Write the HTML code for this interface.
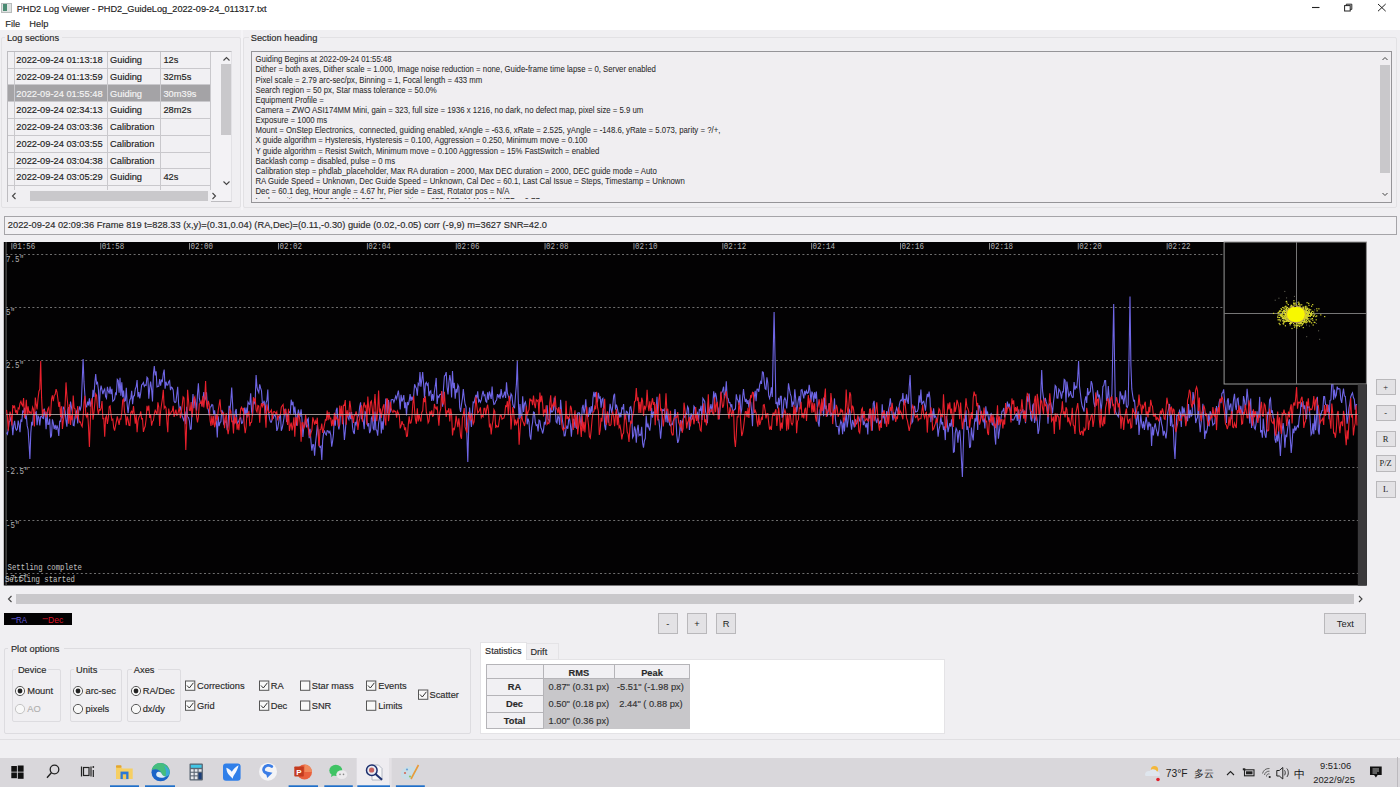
<!DOCTYPE html>
<html><head><meta charset="utf-8">
<style>
*{margin:0;padding:0;box-sizing:border-box}
html,body{width:1400px;height:787px;overflow:hidden;background:#f0eff2;font-family:"Liberation Sans",sans-serif;color:#2a2a2a}
.a{position:absolute}
.t{position:absolute;white-space:pre;font-size:9.3px;line-height:1;-webkit-text-stroke:0.15px currentColor;transform:scaleY(1.06);transform-origin:0 0.8465em}
#title{left:0;top:0;width:1400px;height:30px;background:#fff}
.tbl{border-collapse:collapse}
.sec{font-size:7.8px;line-height:10.15px;color:#222}
.btn{position:absolute;background:#e3e2e5;border:1px solid #b9b8bb;font-size:9px;text-align:center;color:#222}
.sb{position:absolute;background:#c9c8cb}
.chk{position:absolute;width:10px;height:10px;border:1px solid #555;background:#f6f6f6}
.rad{position:absolute;width:10px;height:10px;border:1px solid #555;border-radius:50%;background:#f6f6f6}
.mono{font-family:"Liberation Mono",monospace}
</style></head><body>
<!-- title & menu -->
<div id="title" class="a"></div>
<div class="a" style="left:1.4px;top:3.1px;width:11px;height:9.5px;background:#dfe3e2;border:1px solid #b8bcbc"></div>
<div class="a" style="left:2.6px;top:4.3px;width:4.6px;height:7.1px;background:#4a8a72"></div>
<svg class="a" style="left:1300px;top:0" width="100" height="16">
<line x1="12" y1="7.5" x2="19.5" y2="7.5" stroke="#222" stroke-width="1.1"/>
<rect x="44.6" y="5.6" width="5.6" height="5.4" fill="none" stroke="#222" stroke-width="1"/>
<path d="M46.3 5.6 V4.2 H51.8 V9.4 H50.2" fill="none" stroke="#222" stroke-width="1"/>
<path d="M78 4 L85.7 11.2 M85.7 4 L78 11.2" stroke="#222" stroke-width="1"/>
</svg>
<div class="t" style="left:16.7px;top:4.66px;font-size:9.20px;color:#222">PHD2 Log Viewer - PHD2_GuideLog_2022-09-24_011317.txt</div>
<div class="t" style="left:5.3px;top:19.98px;font-size:9.30px;">File</div>
<div class="t" style="left:29.3px;top:19.98px;font-size:9.30px;">Help</div>
<div class="a" style="left:1.0px;top:37.0px;width:240.0px;height:171.0px;border:1px solid #e2e1e4;border-radius:2px"></div>
<div class="a" style="left:5.0px;top:34.0px;width:57.0px;height:8.0px;background:#f0eff2"></div>
<div class="t" style="left:6.9px;top:33.68px;font-size:9.30px;">Log sections</div>
<div class="a" style="left:7.0px;top:51.0px;width:225.0px;height:151.0px;background:#f1f0f3;border:1px solid #bdbcc0;border-right-color:#e2e1e5"></div>
<div class="a" style="left:211.0px;top:52.0px;width:20.0px;height:149.0px;background:#f3f2f5"></div>
<div class="a" style="left:7.5px;top:67.7px;width:203.5px;height:1.0px;background:#c9c8cc"></div>
<div class="t" style="left:16.3px;top:55.98px;font-size:9.30px;color:#222">2022-09-24 01:13:18</div>
<div class="t" style="left:110.0px;top:55.98px;font-size:9.30px;color:#222">Guiding</div>
<div class="t" style="left:163.4px;top:55.98px;font-size:9.30px;color:#222">12s</div>
<div class="a" style="left:7.5px;top:84.4px;width:203.5px;height:1.0px;background:#c9c8cc"></div>
<div class="t" style="left:16.3px;top:72.74px;font-size:9.30px;color:#222">2022-09-24 01:13:59</div>
<div class="t" style="left:110.0px;top:72.74px;font-size:9.30px;color:#222">Guiding</div>
<div class="t" style="left:163.4px;top:72.74px;font-size:9.30px;color:#222">32m5s</div>
<div class="a" style="left:7.5px;top:85.4px;width:203.5px;height:16.3px;background:#a4a3a6"></div>
<div class="a" style="left:7.5px;top:101.2px;width:203.5px;height:1.0px;background:#c9c8cc"></div>
<div class="t" style="left:16.3px;top:89.50px;font-size:9.30px;color:#f4f4f4">2022-09-24 01:55:48</div>
<div class="t" style="left:110.0px;top:89.50px;font-size:9.30px;color:#f4f4f4">Guiding</div>
<div class="t" style="left:163.4px;top:89.50px;font-size:9.30px;color:#f4f4f4">30m39s</div>
<div class="a" style="left:7.5px;top:117.9px;width:203.5px;height:1.0px;background:#c9c8cc"></div>
<div class="t" style="left:16.3px;top:106.26px;font-size:9.30px;color:#222">2022-09-24 02:34:13</div>
<div class="t" style="left:110.0px;top:106.26px;font-size:9.30px;color:#222">Guiding</div>
<div class="t" style="left:163.4px;top:106.26px;font-size:9.30px;color:#222">28m2s</div>
<div class="a" style="left:7.5px;top:134.7px;width:203.5px;height:1.0px;background:#c9c8cc"></div>
<div class="t" style="left:16.3px;top:123.02px;font-size:9.30px;color:#222">2022-09-24 03:03:36</div>
<div class="t" style="left:110.0px;top:123.02px;font-size:9.30px;color:#222">Calibration</div>
<div class="t" style="left:163.4px;top:123.02px;font-size:9.30px;color:#222"></div>
<div class="a" style="left:7.5px;top:151.5px;width:203.5px;height:1.0px;background:#c9c8cc"></div>
<div class="t" style="left:16.3px;top:139.78px;font-size:9.30px;color:#222">2022-09-24 03:03:55</div>
<div class="t" style="left:110.0px;top:139.78px;font-size:9.30px;color:#222">Calibration</div>
<div class="t" style="left:163.4px;top:139.78px;font-size:9.30px;color:#222"></div>
<div class="a" style="left:7.5px;top:168.2px;width:203.5px;height:1.0px;background:#c9c8cc"></div>
<div class="t" style="left:16.3px;top:156.54px;font-size:9.30px;color:#222">2022-09-24 03:04:38</div>
<div class="t" style="left:110.0px;top:156.54px;font-size:9.30px;color:#222">Calibration</div>
<div class="t" style="left:163.4px;top:156.54px;font-size:9.30px;color:#222"></div>
<div class="a" style="left:7.5px;top:185.0px;width:203.5px;height:1.0px;background:#c9c8cc"></div>
<div class="t" style="left:16.3px;top:173.30px;font-size:9.30px;color:#222">2022-09-24 03:05:29</div>
<div class="t" style="left:110.0px;top:173.30px;font-size:9.30px;color:#222">Guiding</div>
<div class="t" style="left:163.4px;top:173.30px;font-size:9.30px;color:#222">42s</div>
<div class="a" style="left:14.0px;top:51.5px;width:1.0px;height:138.5px;background:#c9c8cc"></div>
<div class="a" style="left:106.8px;top:51.5px;width:1.0px;height:138.5px;background:#c9c8cc"></div>
<div class="a" style="left:160.4px;top:51.5px;width:1.0px;height:138.5px;background:#c9c8cc"></div>
<div class="a" style="left:210.3px;top:51.5px;width:1.0px;height:138.5px;background:#c9c8cc"></div>
<div class="a" style="left:221.3px;top:64.0px;width:10.2px;height:70.7px;background:#c9c8cb"></div>
<svg class="a" style="left:211px;top:51px" width="21" height="140"><path d="M12.5 9.5 L15.5 6.5 L18.5 9.5" fill="none" stroke="#444" stroke-width="1.1"/><path d="M12.5 130.5 L15.5 133.5 L18.5 130.5" fill="none" stroke="#444" stroke-width="1.1"/></svg>
<div class="a" style="left:7.5px;top:189.5px;width:203.5px;height:12.0px;background:#f0eff2"></div>
<div class="a" style="left:30.3px;top:190.6px;width:177.5px;height:10.4px;background:#c9c8cb"></div>
<svg class="a" style="left:7px;top:188px" width="215" height="14"><path d="M8.5 5 L5.5 8 L8.5 11" fill="none" stroke="#444" stroke-width="1.1"/><path d="M205.5 5 L208.5 8 L205.5 11" fill="none" stroke="#444" stroke-width="1.1"/></svg>
<div class="a" style="left:241.0px;top:30.0px;width:2.0px;height:180.0px;background:#f5f4f7"></div>
<div class="a" style="left:243.0px;top:37.0px;width:1154.0px;height:171.0px;border:1px solid #e2e1e4;border-radius:2px"></div>
<div class="a" style="left:249.0px;top:34.0px;width:71.0px;height:8.0px;background:#f0eff2"></div>
<div class="t" style="left:250.7px;top:33.88px;font-size:9.30px;">Section heading</div>
<div class="a" style="left:251.3px;top:51.2px;width:1141.2px;height:151.8px;background:#f0eef1;border:1px solid #959498"></div>
<div class="a" style="left:252.3px;top:52.4px;width:1120px;height:147px;overflow:hidden">
<div class="t" style="left:3.2px;top:3.85px;font-size:7.80px;color:#2a2a2a;-webkit-text-stroke:0.05px #2a2a2a">Guiding Begins at 2022-09-24 01:55:48</div>
<div class="t" style="left:3.2px;top:14.00px;font-size:7.80px;color:#2a2a2a;-webkit-text-stroke:0.05px #2a2a2a">Dither = both axes, Dither scale = 1.000, Image noise reduction = none, Guide-frame time lapse = 0, Server enabled</div>
<div class="t" style="left:3.2px;top:24.15px;font-size:7.80px;color:#2a2a2a;-webkit-text-stroke:0.05px #2a2a2a">Pixel scale = 2.79 arc-sec/px, Binning = 1, Focal length = 433 mm</div>
<div class="t" style="left:3.2px;top:34.30px;font-size:7.80px;color:#2a2a2a;-webkit-text-stroke:0.05px #2a2a2a">Search region = 50 px, Star mass tolerance = 50.0%</div>
<div class="t" style="left:3.2px;top:44.45px;font-size:7.80px;color:#2a2a2a;-webkit-text-stroke:0.05px #2a2a2a">Equipment Profile =</div>
<div class="t" style="left:3.2px;top:54.60px;font-size:7.80px;color:#2a2a2a;-webkit-text-stroke:0.05px #2a2a2a">Camera = ZWO ASI174MM Mini, gain = 323, full size = 1936 x 1216, no dark, no defect map, pixel size = 5.9 um</div>
<div class="t" style="left:3.2px;top:64.75px;font-size:7.80px;color:#2a2a2a;-webkit-text-stroke:0.05px #2a2a2a">Exposure = 1000 ms</div>
<div class="t" style="left:3.2px;top:74.90px;font-size:7.80px;color:#2a2a2a;-webkit-text-stroke:0.05px #2a2a2a">Mount = OnStep Electronics,  connected, guiding enabled, xAngle = -63.6, xRate = 2.525, yAngle = -148.6, yRate = 5.073, parity = ?/+,</div>
<div class="t" style="left:3.2px;top:85.05px;font-size:7.80px;color:#2a2a2a;-webkit-text-stroke:0.05px #2a2a2a">X guide algorithm = Hysteresis, Hysteresis = 0.100, Aggression = 0.250, Minimum move = 0.100</div>
<div class="t" style="left:3.2px;top:95.20px;font-size:7.80px;color:#2a2a2a;-webkit-text-stroke:0.05px #2a2a2a">Y guide algorithm = Resist Switch, Minimum move = 0.100 Aggression = 15% FastSwitch = enabled</div>
<div class="t" style="left:3.2px;top:105.35px;font-size:7.80px;color:#2a2a2a;-webkit-text-stroke:0.05px #2a2a2a">Backlash comp = disabled, pulse = 0 ms</div>
<div class="t" style="left:3.2px;top:115.50px;font-size:7.80px;color:#2a2a2a;-webkit-text-stroke:0.05px #2a2a2a">Calibration step = phdlab_placeholder, Max RA duration = 2000, Max DEC duration = 2000, DEC guide mode = Auto</div>
<div class="t" style="left:3.2px;top:125.65px;font-size:7.80px;color:#2a2a2a;-webkit-text-stroke:0.05px #2a2a2a">RA Guide Speed = Unknown, Dec Guide Speed = Unknown, Cal Dec = 60.1, Last Cal Issue = Steps, Timestamp = Unknown</div>
<div class="t" style="left:3.2px;top:135.80px;font-size:7.80px;color:#2a2a2a;-webkit-text-stroke:0.05px #2a2a2a">Dec = 60.1 deg, Hour angle = 4.67 hr, Pier side = East, Rotator pos = N/A</div>
<div class="t" style="left:3.2px;top:145.95px;font-size:7.80px;color:#2a2a2a;-webkit-text-stroke:0.05px #2a2a2a">Lock position = 955.591, 1141.336, Star position = 955.187, 1141.445, HFD = 2.77 px</div>
</div>
<div class="a" style="left:1380.0px;top:65.0px;width:10.0px;height:107.5px;background:#c9c8cb"></div>
<svg class="a" style="left:1378px;top:52px" width="14" height="150"><path d="M4.5 8 L7 5.5 L9.5 8" fill="none" stroke="#444" stroke-width="1"/><path d="M4.5 141 L7 143.5 L9.5 141" fill="none" stroke="#444" stroke-width="1"/></svg>
<div class="a" style="left:4.0px;top:216.0px;width:1392.5px;height:19.0px;background:#f2f1f4;border:1px solid #a5a4a8"></div>
<div class="t" style="left:7.8px;top:220.78px;font-size:9.30px;">2022-09-24 02:09:36 Frame 819 t=828.33 (x,y)=(0.31,0.04) (RA,Dec)=(0.11,-0.30) guide (0.02,-0.05) corr (-9,9) m=3627 SNR=42.0</div>
<svg class="a" style="left:0;top:0" width="1400" height="600" shape-rendering="auto">
<rect x="3.8" y="242" width="1363" height="343.5" fill="#030203"/>
<rect x="5.5" y="242" width="1.2" height="343.5" fill="#555"/>
<line x1="6" y1="254.5" x2="1224" y2="254.5" stroke="#6e6e6e" stroke-width="1" stroke-dasharray="2 2.4"/>
<line x1="6" y1="307.5" x2="1224" y2="307.5" stroke="#6e6e6e" stroke-width="1" stroke-dasharray="2 2.4"/>
<line x1="6" y1="360.5" x2="1224" y2="360.5" stroke="#6e6e6e" stroke-width="1" stroke-dasharray="2 2.4"/>
<line x1="6" y1="467.5" x2="1366" y2="467.5" stroke="#6e6e6e" stroke-width="1" stroke-dasharray="2 2.4"/>
<line x1="6" y1="520.5" x2="1366" y2="520.5" stroke="#6e6e6e" stroke-width="1" stroke-dasharray="2 2.4"/>
<line x1="6" y1="573.5" x2="1366" y2="573.5" stroke="#6e6e6e" stroke-width="1" stroke-dasharray="2 2.4"/>
<polyline fill="none" stroke="#6f66e6" stroke-width="1.1" points="6.5,432.6 7.4,434.1 8.3,429.2 9.2,421.6 10.1,421.2 11.0,416.5 11.9,422.7 12.8,435.1 13.7,425.5 14.6,420.8 15.5,428.0 16.4,430.1 17.3,429.0 18.2,420.6 19.1,425.0 20.0,432.3 20.9,419.5 21.8,421.7 22.7,411.2 23.6,412.0 24.5,407.9 25.4,419.0 26.3,415.4 27.2,425.9 28.1,429.5 29.0,443.2 29.9,459.0 30.8,433.0 31.7,421.9 32.6,425.4 33.5,412.9 34.4,415.7 35.3,412.8 36.2,411.8 37.1,425.3 38.0,416.0 38.9,417.5 39.8,425.4 40.7,416.5 41.6,416.1 42.5,418.0 43.4,418.6 44.3,408.6 45.2,415.5 46.1,429.1 47.0,411.7 47.9,424.4 48.8,424.2 49.7,418.7 50.6,437.6 51.5,435.7 52.4,419.4 53.3,423.2 54.2,429.1 55.2,424.8 56.1,430.0 57.0,425.4 57.9,428.5 58.8,435.9 59.7,421.3 60.6,421.5 61.5,415.9 62.4,417.5 63.3,407.2 64.2,408.1 65.1,411.2 66.0,420.7 66.9,426.7 67.8,409.6 68.7,407.1 69.6,418.0 70.5,401.6 71.4,406.8 72.3,412.2 73.2,425.3 74.1,425.7 75.0,416.8 75.9,412.3 76.8,410.8 77.7,423.5 78.6,411.7 79.5,407.4 80.4,409.6 81.3,405.4 82.2,380.8 83.1,359.0 84.0,381.9 84.9,395.2 85.8,406.8 86.7,406.9 87.6,401.6 88.5,405.4 89.4,398.4 90.3,406.7 91.2,401.7 92.1,404.1 93.0,389.8 93.9,397.0 94.8,383.1 95.7,374.0 96.6,383.7 97.5,382.4 98.4,389.4 99.3,408.2 100.2,390.8 101.1,385.7 102.0,389.9 102.9,394.2 103.8,390.5 104.7,389.0 105.6,396.5 106.5,398.3 107.4,386.9 108.3,390.9 109.2,393.7 110.1,386.6 111.0,394.2 111.9,388.9 112.8,401.3 113.7,400.5 114.6,399.2 115.5,393.1 116.4,394.3 117.3,379.4 118.2,380.4 119.1,392.6 120.0,377.7 120.9,395.7 121.8,382.4 122.7,397.1 123.6,390.6 124.5,401.3 125.4,400.7 126.3,387.7 127.2,404.9 128.1,413.1 129.0,404.8 129.9,399.7 130.8,398.2 131.7,390.9 132.6,404.1 133.5,395.9 134.4,395.8 135.3,389.0 136.2,386.7 137.1,380.1 138.0,397.2 138.9,392.2 139.8,398.5 140.7,393.0 141.6,385.1 142.5,384.2 143.4,382.5 144.3,386.3 145.2,384.9 146.1,385.4 147.0,377.2 147.9,378.5 148.8,398.7 149.7,388.4 150.6,381.6 151.6,389.6 152.5,401.4 153.4,374.3 154.3,366.0 155.2,375.5 156.1,371.3 157.0,386.8 157.9,386.4 158.8,386.3 159.7,379.1 160.6,385.7 161.5,380.2 162.4,381.3 163.3,373.6 164.2,369.6 165.1,388.7 166.0,381.7 166.9,385.2 167.8,385.0 168.7,381.8 169.6,380.7 170.5,390.1 171.4,387.2 172.3,387.8 173.2,390.2 174.1,401.2 175.0,402.5 175.9,402.0 176.8,394.8 177.7,386.8 178.6,403.3 179.5,411.1 180.4,406.3 181.3,411.0 182.2,415.9 183.1,418.6 184.0,421.2 184.9,411.6 185.8,424.1 186.7,406.8 187.6,416.8 188.5,417.6 189.4,420.8 190.3,429.4 191.2,429.0 192.1,407.6 193.0,394.0 193.9,408.2 194.8,398.6 195.7,402.5 196.6,410.7 197.5,394.0 198.4,383.4 199.3,398.2 200.2,402.8 201.1,402.5 202.0,404.9 202.9,399.3 203.8,392.0 204.7,400.4 205.6,398.4 206.5,392.4 207.4,407.4 208.3,409.7 209.2,415.4 210.1,406.9 211.0,406.8 211.9,404.5 212.8,405.0 213.7,414.5 214.6,410.4 215.5,418.6 216.4,421.6 217.3,437.4 218.2,416.2 219.1,426.1 220.0,422.5 220.9,421.8 221.8,410.0 222.7,412.6 223.6,423.7 224.5,421.8 225.4,422.3 226.3,419.7 227.2,430.3 228.1,425.1 229.0,405.8 229.9,410.4 230.8,401.6 231.7,387.6 232.6,403.6 233.5,424.7 234.4,422.9 235.3,411.7 236.2,409.0 237.1,424.4 238.0,422.2 238.9,420.5 239.8,418.4 240.7,417.7 241.6,423.4 242.5,422.9 243.4,419.1 244.3,407.5 245.2,414.8 246.1,407.5 247.0,417.7 248.0,402.1 248.9,403.9 249.8,404.4 250.7,393.2 251.6,411.6 252.5,415.9 253.4,400.8 254.3,403.3 255.2,400.4 256.1,375.1 257.0,387.5 257.9,390.6 258.8,392.6 259.7,384.4 260.6,388.0 261.5,390.9 262.4,403.7 263.3,403.2 264.2,400.7 265.1,413.4 266.0,402.8 266.9,400.5 267.8,389.6 268.7,413.2 269.6,418.9 270.5,422.1 271.4,422.2 272.3,418.3 273.2,418.4 274.1,415.4 275.0,415.0 275.9,417.9 276.8,430.9 277.7,428.6 278.6,423.1 279.5,417.1 280.4,413.8 281.3,430.8 282.2,428.1 283.1,423.4 284.0,417.6 284.9,408.9 285.8,413.2 286.7,422.0 287.6,414.8 288.5,413.0 289.4,411.8 290.3,413.0 291.2,399.7 292.1,405.1 293.0,401.7 293.9,414.4 294.8,406.6 295.7,414.4 296.6,425.8 297.5,415.7 298.4,409.7 299.3,414.7 300.2,415.9 301.1,409.4 302.0,419.3 302.9,437.0 303.8,426.9 304.7,424.7 305.6,418.1 306.5,427.4 307.4,419.6 308.3,418.4 309.2,438.2 310.1,428.9 311.0,441.7 311.9,450.7 312.8,444.6 313.7,444.7 314.6,455.7 315.5,443.4 316.4,435.0 317.3,425.0 318.2,431.9 319.1,445.7 320.0,447.3 320.9,446.2 321.8,460.0 322.7,440.1 323.6,432.9 324.5,431.2 325.4,433.7 326.3,435.0 327.2,430.7 328.1,431.0 329.0,432.9 329.9,431.4 330.8,435.1 331.7,446.7 332.6,441.1 333.5,434.0 334.4,416.8 335.3,425.6 336.2,410.3 337.1,407.8 338.0,424.1 338.9,429.4 339.8,424.2 340.7,409.5 341.6,413.9 342.5,412.7 343.4,423.0 344.4,440.0 345.3,431.1 346.2,419.5 347.1,411.9 348.0,417.7 348.9,419.5 349.8,412.1 350.7,419.3 351.6,412.1 352.5,426.8 353.4,432.0 354.3,434.0 355.2,421.9 356.1,424.7 357.0,420.3 357.9,416.3 358.8,415.0 359.7,406.8 360.6,402.3 361.5,418.6 362.4,417.7 363.3,421.2 364.2,429.3 365.1,411.6 366.0,412.4 366.9,421.1 367.8,426.3 368.7,423.1 369.6,433.1 370.5,430.7 371.4,418.4 372.3,416.0 373.2,428.4 374.1,430.3 375.0,411.6 375.9,429.7 376.8,430.4 377.7,435.7 378.6,423.2 379.5,418.3 380.4,408.9 381.3,433.5 382.2,421.4 383.1,429.6 384.0,414.4 384.9,414.2 385.8,398.6 386.7,402.0 387.6,413.5 388.5,400.0 389.4,412.8 390.3,411.9 391.2,399.9 392.1,399.5 393.0,399.5 393.9,402.2 394.8,399.4 395.7,396.1 396.6,398.8 397.5,394.4 398.4,390.6 399.3,398.7 400.2,409.4 401.1,394.8 402.0,401.5 402.9,399.0 403.8,395.1 404.7,408.1 405.6,402.4 406.5,415.4 407.4,402.0 408.3,405.1 409.2,400.7 410.1,394.0 411.0,401.0 411.9,396.7 412.8,400.2 413.7,395.5 414.6,384.2 415.5,386.8 416.4,388.4 417.3,395.8 418.2,383.5 419.1,385.0 420.0,372.0 420.9,386.7 421.8,379.7 422.7,372.1 423.6,383.7 424.5,398.2 425.4,383.9 426.3,382.3 427.2,385.1 428.1,383.6 429.0,396.1 429.9,391.8 430.8,390.8 431.7,401.0 432.6,394.1 433.5,400.7 434.4,391.7 435.3,385.7 436.2,377.9 437.1,403.9 438.0,396.2 438.9,397.3 439.8,394.5 440.8,394.4 441.7,393.0 442.6,406.7 443.5,388.2 444.4,376.0 445.3,375.1 446.2,372.1 447.1,387.6 448.0,394.4 448.9,382.9 449.8,375.1 450.7,381.0 451.6,397.5 452.5,371.0 453.4,388.1 454.3,382.9 455.2,398.7 456.1,389.0 457.0,392.5 457.9,384.8 458.8,386.8 459.7,407.3 460.6,412.0 461.5,404.4 462.4,398.6 463.3,389.0 464.2,397.6 465.1,404.2 466.0,406.7 466.9,435.0 467.8,462.0 468.7,428.0 469.6,407.6 470.5,418.4 471.4,427.0 472.3,413.3 473.2,402.1 474.1,402.7 475.0,398.3 475.9,394.8 476.8,398.4 477.7,391.4 478.6,401.6 479.5,400.0 480.4,402.3 481.3,399.9 482.2,394.6 483.1,390.8 484.0,395.6 484.9,394.8 485.8,401.3 486.7,402.3 487.6,392.3 488.5,399.6 489.4,391.5 490.3,394.8 491.2,399.0 492.1,386.6 493.0,399.2 493.9,404.3 494.8,403.8 495.7,401.1 496.6,400.1 497.5,394.1 498.4,396.9 499.3,395.0 500.2,398.8 501.1,389.1 502.0,395.7 502.9,397.4 503.8,395.0 504.7,391.6 505.6,398.0 506.5,382.4 507.4,393.2 508.3,395.9 509.2,398.2 510.1,400.1 511.0,393.8 511.9,395.5 512.8,404.2 513.7,407.2 514.6,407.8 515.5,395.4 516.4,384.4 517.3,361.0 518.2,398.4 519.1,419.1 520.0,404.0 520.9,418.3 521.8,416.0 522.7,396.3 523.6,412.0 524.5,403.7 525.4,401.9 526.3,407.0 527.2,424.3 528.1,418.6 529.0,421.8 529.9,435.6 530.8,439.6 531.7,427.5 532.6,422.3 533.5,412.0 534.4,412.6 535.3,422.2 536.2,425.5 537.2,424.8 538.1,431.4 539.0,420.1 539.9,420.9 540.8,427.6 541.7,429.4 542.6,433.5 543.5,429.8 544.4,421.9 545.3,424.5 546.2,414.5 547.1,405.2 548.0,419.3 548.9,420.0 549.8,422.5 550.7,407.6 551.6,411.9 552.5,411.8 553.4,409.8 554.3,397.6 555.2,407.8 556.1,421.8 557.0,423.0 557.9,415.7 558.8,417.8 559.7,424.9 560.6,399.8 561.5,410.5 562.4,420.2 563.3,425.6 564.2,435.9 565.1,435.7 566.0,428.9 566.9,426.3 567.8,428.7 568.7,419.1 569.6,418.8 570.5,425.7 571.4,436.6 572.3,424.1 573.2,419.3 574.1,419.3 575.0,427.9 575.9,419.9 576.8,428.9 577.7,413.2 578.6,412.8 579.5,413.0 580.4,420.9 581.3,426.1 582.2,408.0 583.1,404.9 584.0,413.8 584.9,408.8 585.8,399.3 586.7,415.0 587.6,416.7 588.5,416.4 589.4,407.4 590.3,414.7 591.2,406.2 592.1,412.7 593.0,398.1 593.9,391.9 594.8,397.2 595.7,392.2 596.6,401.3 597.5,401.9 598.4,392.9 599.3,398.0 600.2,397.0 601.1,407.6 602.0,399.4 602.9,398.3 603.8,411.4 604.7,425.7 605.6,430.1 606.5,416.8 607.4,413.2 608.3,422.7 609.2,414.2 610.1,403.9 611.0,408.6 611.9,413.3 612.8,405.4 613.7,395.8 614.6,393.7 615.5,409.7 616.4,404.6 617.3,407.8 618.2,412.7 619.1,417.7 620.0,412.6 620.9,417.3 621.8,407.9 622.7,408.7 623.6,404.1 624.5,419.9 625.4,417.8 626.3,411.2 627.2,411.9 628.1,413.9 629.0,422.2 629.9,407.6 630.8,406.6 631.7,411.7 632.6,437.6 633.6,435.7 634.5,426.5 635.4,429.8 636.3,442.8 637.2,430.2 638.1,424.9 639.0,435.6 639.9,434.5 640.8,435.3 641.7,426.7 642.6,442.9 643.5,447.7 644.4,440.7 645.3,438.3 646.2,415.5 647.1,427.3 648.0,424.3 648.9,427.9 649.8,430.7 650.7,422.6 651.6,407.9 652.5,417.6 653.4,412.1 654.3,413.1 655.2,410.9 656.1,411.8 657.0,396.8 657.9,418.9 658.8,419.8 659.7,427.8 660.6,438.6 661.5,428.0 662.4,409.8 663.3,410.5 664.2,409.2 665.1,414.4 666.0,422.1 666.9,408.9 667.8,422.8 668.7,413.8 669.6,424.7 670.5,425.7 671.4,424.1 672.3,424.6 673.2,421.2 674.1,419.0 675.0,409.0 675.9,417.6 676.8,435.1 677.7,442.9 678.6,440.6 679.5,434.2 680.4,420.0 681.3,431.2 682.2,423.1 683.1,419.2 684.0,416.0 684.9,417.3 685.8,413.5 686.7,414.2 687.6,406.4 688.5,408.3 689.4,430.0 690.3,419.4 691.2,413.3 692.1,416.8 693.0,419.5 693.9,406.1 694.8,407.5 695.7,416.6 696.6,414.7 697.5,412.9 698.4,423.3 699.3,409.6 700.2,410.3 701.1,405.7 702.0,419.9 702.9,398.3 703.8,399.8 704.7,401.4 705.6,411.8 706.5,415.2 707.4,423.2 708.3,402.5 709.2,412.9 710.1,408.9 711.0,404.2 711.9,412.2 712.8,403.8 713.7,391.2 714.6,399.5 715.5,392.9 716.4,396.8 717.3,406.0 718.2,408.7 719.1,419.5 720.0,408.8 720.9,393.2 721.8,392.7 722.7,390.4 723.6,386.7 724.5,398.3 725.4,393.6 726.3,381.3 727.2,397.9 728.1,398.3 729.0,402.6 729.9,402.5 730.9,406.8 731.8,404.2 732.7,413.1 733.6,410.6 734.5,409.3 735.4,409.0 736.3,394.4 737.2,399.0 738.1,400.6 739.0,404.9 739.9,394.5 740.8,414.2 741.7,409.5 742.6,397.7 743.5,389.0 744.4,397.2 745.3,402.0 746.2,398.8 747.1,403.9 748.0,400.1 748.9,407.7 749.8,400.3 750.7,402.3 751.6,410.7 752.5,426.2 753.4,402.8 754.3,397.0 755.2,390.9 756.1,401.1 757.0,389.2 757.9,389.1 758.8,391.8 759.7,384.6 760.6,381.7 761.5,383.9 762.4,371.9 763.3,372.3 764.2,381.0 765.1,388.7 766.0,389.4 766.9,377.3 767.8,382.9 768.7,395.4 769.6,398.4 770.5,394.8 771.4,387.3 772.3,396.9 773.2,351.7 774.1,312.0 775.0,356.1 775.9,404.1 776.8,401.7 777.7,408.4 778.6,397.7 779.5,405.3 780.4,396.2 781.3,396.2 782.2,417.8 783.1,412.2 784.0,399.9 784.9,397.9 785.8,400.4 786.7,408.4 787.6,397.6 788.5,383.4 789.4,388.9 790.3,393.9 791.2,396.5 792.1,406.9 793.0,402.4 793.9,404.2 794.8,389.3 795.7,398.8 796.6,412.1 797.5,406.5 798.4,399.8 799.3,396.0 800.2,407.3 801.1,390.0 802.0,389.5 802.9,394.1 803.8,398.4 804.7,390.9 805.6,394.0 806.5,390.9 807.4,393.4 808.3,392.7 809.2,384.8 810.1,391.3 811.0,401.6 811.9,391.6 812.8,393.7 813.7,402.3 814.6,392.2 815.5,398.7 816.4,391.5 817.3,406.9 818.2,422.7 819.1,426.7 820.0,410.6 820.9,411.9 821.8,407.5 822.7,405.6 823.6,416.2 824.5,397.4 825.4,409.0 826.3,405.6 827.3,416.3 828.2,411.4 829.1,403.2 830.0,408.3 830.9,415.2 831.8,413.5 832.7,417.4 833.6,411.9 834.5,398.4 835.4,418.6 836.3,426.3 837.2,426.5 838.1,426.3 839.0,434.8 839.9,426.0 840.8,421.0 841.7,423.1 842.6,434.3 843.5,417.9 844.4,431.5 845.3,421.4 846.2,412.8 847.1,427.4 848.0,421.3 848.9,408.8 849.8,411.2 850.7,422.7 851.6,429.8 852.5,420.0 853.4,423.1 854.3,427.5 855.2,419.0 856.1,424.1 857.0,423.1 857.9,418.6 858.8,417.2 859.7,420.9 860.6,421.9 861.5,416.4 862.4,414.7 863.3,425.2 864.2,421.4 865.1,424.5 866.0,427.5 866.9,423.1 867.8,434.5 868.7,413.7 869.6,418.4 870.5,411.4 871.4,425.9 872.3,430.7 873.2,403.6 874.1,400.8 875.0,413.5 875.9,420.1 876.8,423.0 877.7,418.1 878.6,420.9 879.5,424.2 880.4,420.3 881.3,427.7 882.2,404.2 883.1,418.4 884.0,411.0 884.9,423.6 885.8,418.9 886.7,411.1 887.6,418.1 888.5,409.8 889.4,405.6 890.3,398.2 891.2,406.8 892.1,414.0 893.0,420.4 893.9,412.4 894.8,418.3 895.7,411.8 896.6,407.8 897.5,410.5 898.4,414.9 899.3,405.2 900.2,401.2 901.1,399.9 902.0,400.8 902.9,393.1 903.8,405.3 904.7,398.8 905.6,402.8 906.5,394.4 907.4,400.7 908.3,403.9 909.2,387.0 910.1,375.0 911.0,397.4 911.9,423.0 912.8,421.3 913.7,408.6 914.6,405.8 915.5,411.9 916.4,411.7 917.3,411.4 918.2,408.6 919.1,395.4 920.0,402.8 920.9,389.5 921.8,404.8 922.7,402.3 923.7,401.3 924.6,405.1 925.5,410.7 926.4,400.0 927.3,393.9 928.2,397.2 929.1,391.5 930.0,398.6 930.9,422.2 931.8,410.9 932.7,420.5 933.6,408.2 934.5,417.2 935.4,416.1 936.3,418.1 937.2,424.4 938.1,436.6 939.0,429.3 939.9,425.9 940.8,415.9 941.7,424.5 942.6,422.0 943.5,430.0 944.4,426.4 945.3,440.1 946.2,416.0 947.1,420.5 948.0,432.2 948.9,427.5 949.8,423.2 950.7,426.5 951.6,419.2 952.5,429.3 953.4,452.3 954.3,451.7 955.2,433.5 956.1,428.4 957.0,430.3 957.9,442.6 958.8,432.8 959.7,430.2 960.6,441.2 961.5,461.0 962.4,477.0 963.3,446.5 964.2,418.6 965.1,421.9 966.0,410.4 966.9,429.9 967.8,426.2 968.7,433.5 969.6,447.4 970.5,446.9 971.4,427.6 972.3,435.1 973.2,440.4 974.1,426.5 975.0,418.4 975.9,421.5 976.8,410.3 977.7,429.9 978.6,405.7 979.5,405.9 980.4,412.5 981.3,414.9 982.2,418.6 983.1,421.2 984.0,418.4 984.9,428.4 985.8,406.2 986.7,414.5 987.6,412.4 988.5,418.9 989.4,421.9 990.3,414.4 991.2,413.6 992.1,424.3 993.0,425.2 993.9,417.3 994.8,435.6 995.7,444.6 996.6,417.7 997.5,420.5 998.4,438.8 999.3,431.8 1000.2,424.5 1001.1,417.4 1002.0,411.2 1002.9,410.9 1003.8,408.0 1004.7,417.4 1005.6,411.6 1006.5,408.6 1007.4,401.6 1008.3,408.0 1009.2,403.5 1010.1,408.0 1011.0,419.5 1011.9,419.2 1012.8,420.2 1013.7,419.9 1014.6,417.8 1015.5,415.7 1016.4,413.4 1017.3,421.0 1018.2,409.6 1019.1,425.0 1020.1,420.7 1021.0,412.6 1021.9,411.5 1022.8,409.1 1023.7,415.3 1024.6,410.7 1025.5,423.3 1026.4,412.6 1027.3,396.0 1028.2,401.6 1029.1,393.6 1030.0,405.4 1030.9,419.0 1031.8,421.4 1032.7,405.5 1033.6,403.6 1034.5,423.0 1035.4,419.0 1036.3,414.5 1037.2,420.6 1038.1,433.9 1039.0,429.6 1039.9,418.1 1040.8,392.4 1041.7,370.0 1042.6,391.1 1043.5,397.8 1044.4,403.5 1045.3,397.8 1046.2,401.9 1047.1,404.7 1048.0,423.6 1048.9,405.5 1049.8,403.8 1050.7,402.7 1051.6,406.9 1052.5,413.4 1053.4,403.0 1054.3,395.3 1055.2,385.5 1056.1,386.6 1057.0,398.1 1057.9,398.2 1058.8,389.1 1059.7,390.6 1060.6,393.4 1061.5,398.6 1062.4,391.9 1063.3,391.9 1064.2,379.5 1065.1,380.3 1066.0,402.6 1066.9,381.6 1067.8,388.6 1068.7,396.4 1069.6,394.9 1070.5,391.2 1071.4,395.3 1072.3,397.4 1073.2,397.2 1074.1,382.1 1075.0,389.7 1075.9,386.5 1076.8,387.6 1077.7,377.2 1078.6,361.0 1079.5,386.1 1080.4,393.4 1081.3,401.3 1082.2,406.3 1083.1,408.7 1084.0,411.6 1084.9,400.5 1085.8,396.4 1086.7,403.0 1087.6,388.1 1088.5,395.2 1089.4,392.2 1090.3,391.8 1091.2,381.1 1092.1,383.8 1093.0,391.7 1093.9,402.3 1094.8,407.0 1095.7,400.4 1096.6,397.1 1097.5,390.4 1098.4,397.5 1099.3,394.6 1100.2,400.7 1101.1,411.7 1102.0,402.0 1102.9,386.5 1103.8,385.6 1104.7,380.6 1105.6,380.6 1106.5,400.5 1107.4,400.2 1108.3,386.1 1109.2,398.3 1110.1,408.4 1111.0,399.8 1111.9,394.1 1112.8,349.6 1113.7,304.0 1114.6,364.6 1115.5,411.4 1116.5,414.2 1117.4,415.1 1118.3,416.8 1119.2,411.2 1120.1,391.3 1121.0,394.6 1121.9,399.4 1122.8,395.3 1123.7,404.3 1124.6,397.7 1125.5,390.3 1126.4,406.5 1127.3,407.5 1128.2,404.7 1129.1,353.4 1130.0,296.5 1130.9,365.6 1131.8,388.9 1132.7,395.5 1133.6,401.1 1134.5,400.4 1135.4,410.9 1136.3,424.6 1137.2,418.1 1138.1,411.2 1139.0,434.9 1139.9,425.2 1140.8,415.1 1141.7,423.4 1142.6,428.3 1143.5,421.3 1144.4,430.0 1145.3,423.3 1146.2,416.9 1147.1,423.3 1148.0,430.3 1148.9,421.8 1149.8,425.6 1150.7,423.8 1151.6,446.0 1152.5,426.7 1153.4,435.4 1154.3,427.5 1155.2,423.4 1156.1,428.6 1157.0,432.1 1157.9,436.2 1158.8,430.1 1159.7,420.3 1160.6,416.7 1161.5,423.4 1162.4,427.1 1163.3,435.6 1164.2,430.8 1165.1,433.8 1166.0,438.5 1166.9,429.7 1167.8,412.7 1168.7,408.2 1169.6,403.9 1170.5,426.1 1171.4,414.8 1172.3,426.2 1173.2,425.3 1174.1,446.1 1175.0,459.0 1175.9,435.8 1176.8,415.4 1177.7,415.3 1178.6,416.0 1179.5,410.6 1180.4,412.8 1181.3,426.9 1182.2,406.3 1183.1,413.9 1184.0,407.7 1184.9,413.5 1185.8,420.6 1186.7,416.4 1187.6,421.2 1188.5,404.0 1189.4,418.2 1190.3,409.9 1191.2,416.1 1192.1,415.0 1193.0,392.1 1193.9,397.5 1194.8,407.8 1195.7,423.0 1196.6,419.3 1197.5,417.6 1198.4,404.0 1199.3,421.8 1200.2,432.3 1201.1,422.6 1202.0,417.1 1202.9,403.7 1203.8,418.4 1204.7,438.9 1205.6,431.4 1206.5,432.7 1207.4,427.9 1208.3,413.7 1209.2,426.5 1210.1,411.3 1211.0,413.3 1211.9,418.3 1212.9,425.1 1213.8,424.0 1214.7,423.4 1215.6,413.8 1216.5,406.0 1217.4,412.7 1218.3,409.0 1219.2,402.1 1220.1,398.9 1221.0,403.2 1221.9,393.3 1222.8,392.6 1223.7,389.3 1224.6,401.8 1225.5,408.3 1226.4,423.1 1227.3,400.8 1228.2,398.3 1229.1,410.2 1230.0,405.8 1230.9,403.5 1231.8,419.3 1232.7,409.4 1233.6,399.0 1234.5,393.8 1235.4,405.4 1236.3,410.2 1237.2,399.0 1238.1,398.2 1239.0,409.1 1239.9,414.0 1240.8,405.8 1241.7,412.3 1242.6,414.8 1243.5,396.0 1244.4,400.4 1245.3,408.0 1246.2,403.1 1247.1,388.9 1248.0,398.4 1248.9,411.0 1249.8,423.4 1250.7,398.6 1251.6,428.0 1252.5,410.7 1253.4,421.0 1254.3,427.9 1255.2,429.3 1256.1,423.5 1257.0,411.3 1257.9,420.8 1258.8,414.1 1259.7,396.9 1260.6,432.4 1261.5,430.0 1262.4,437.7 1263.3,418.5 1264.2,430.3 1265.1,435.2 1266.0,437.7 1266.9,425.8 1267.8,411.8 1268.7,414.6 1269.6,400.0 1270.5,398.3 1271.4,412.8 1272.3,410.3 1273.2,417.1 1274.1,421.0 1275.0,439.5 1275.9,442.8 1276.8,434.2 1277.7,441.5 1278.6,429.8 1279.5,442.7 1280.4,456.0 1281.3,438.4 1282.2,429.8 1283.1,423.0 1284.0,431.8 1284.9,447.7 1285.8,434.8 1286.7,437.1 1287.6,428.9 1288.5,422.7 1289.4,419.3 1290.3,438.5 1291.2,452.9 1292.1,442.8 1293.0,428.6 1293.9,433.2 1294.8,425.8 1295.7,430.6 1296.6,427.8 1297.5,425.6 1298.4,426.9 1299.3,417.2 1300.2,414.2 1301.1,402.0 1302.0,406.9 1302.9,401.1 1303.8,409.0 1304.7,405.4 1305.6,412.8 1306.5,419.1 1307.4,406.5 1308.3,407.2 1309.3,406.9 1310.2,420.8 1311.1,434.8 1312.0,433.2 1312.9,423.2 1313.8,434.1 1314.7,414.5 1315.6,430.1 1316.5,418.9 1317.4,396.8 1318.3,430.8 1319.2,434.5 1320.1,414.1 1321.0,414.7 1321.9,410.7 1322.8,410.6 1323.7,396.6 1324.6,396.6 1325.5,404.4 1326.4,404.8 1327.3,411.9 1328.2,404.7 1329.1,419.3 1330.0,400.4 1330.9,400.0 1331.8,382.0 1332.7,379.7 1333.6,399.8 1334.5,389.5 1335.4,397.0 1336.3,395.0 1337.2,386.6 1338.1,389.1 1339.0,388.6 1339.9,389.0 1340.8,399.4 1341.7,402.9 1342.6,394.6 1343.5,388.6 1344.4,396.0 1345.3,396.3 1346.2,406.2 1347.1,423.8 1348.0,417.2 1348.9,408.2 1349.8,403.8 1350.7,397.0 1351.6,394.5 1352.5,392.9 1353.4,397.5 1354.3,399.5 1355.2,409.8 1356.1,404.5 1357.0,404.8"/><polyline fill="none" stroke="#e8202c" stroke-width="1.1" points="6.5,409.9 7.4,416.5 8.3,430.7 9.2,417.6 10.1,411.7 11.0,415.1 11.9,425.4 12.8,405.1 13.7,407.4 14.6,406.2 15.5,411.9 16.4,410.8 17.3,414.8 18.2,407.9 19.1,408.9 20.0,403.4 20.9,401.3 21.8,404.4 22.7,405.8 23.6,398.0 24.5,417.8 25.4,412.1 26.3,399.8 27.2,415.1 28.1,406.2 29.0,413.3 29.9,411.7 30.8,413.2 31.7,413.2 32.6,407.1 33.5,409.4 34.4,426.5 35.3,397.6 36.2,404.2 37.1,409.4 38.0,398.9 38.9,391.5 39.8,389.1 40.7,361.0 41.6,397.9 42.5,416.4 43.4,409.8 44.3,410.5 45.2,412.2 46.1,417.4 47.0,413.3 47.9,409.0 48.8,407.4 49.7,416.2 50.6,415.2 51.5,399.3 52.4,395.4 53.3,401.1 54.2,395.4 55.2,394.3 56.1,389.2 57.0,392.2 57.9,399.1 58.8,406.8 59.7,401.8 60.6,417.2 61.5,406.2 62.4,428.9 63.3,421.0 64.2,414.4 65.1,404.5 66.0,382.4 66.9,396.0 67.8,405.0 68.7,423.7 69.6,404.4 70.5,424.9 71.4,415.4 72.3,420.2 73.2,395.5 74.1,407.9 75.0,408.8 75.9,418.0 76.8,416.8 77.7,406.1 78.6,419.0 79.5,422.1 80.4,421.9 81.3,425.1 82.2,426.7 83.1,417.5 84.0,402.6 84.9,395.9 85.8,415.0 86.7,417.0 87.6,412.5 88.5,426.4 89.4,447.0 90.3,422.3 91.2,402.4 92.1,398.2 93.0,419.8 93.9,412.9 94.8,403.5 95.7,393.9 96.6,395.5 97.5,408.5 98.4,414.4 99.3,409.4 100.2,410.3 101.1,408.0 102.0,401.0 102.9,418.6 103.8,418.4 104.7,436.7 105.6,418.0 106.5,415.9 107.4,423.9 108.3,418.3 109.2,406.8 110.1,405.9 111.0,414.6 111.9,420.1 112.8,419.2 113.7,427.7 114.6,430.6 115.5,425.9 116.4,421.3 117.3,416.3 118.2,420.7 119.1,424.8 120.0,419.0 120.9,419.2 121.8,412.4 122.7,400.5 123.6,398.5 124.5,412.1 125.4,414.9 126.3,425.3 127.2,416.3 128.1,419.7 129.0,425.3 129.9,425.6 130.8,412.4 131.7,411.2 132.6,413.8 133.5,406.0 134.4,415.3 135.3,423.6 136.2,414.8 137.1,432.2 138.0,420.8 138.9,417.3 139.8,415.7 140.7,411.3 141.6,418.9 142.5,418.5 143.4,431.9 144.3,428.5 145.2,426.3 146.1,419.1 147.0,405.8 147.9,410.6 148.8,405.5 149.7,417.9 150.6,414.2 151.6,425.6 152.5,421.5 153.4,420.5 154.3,414.0 155.2,410.3 156.1,412.0 157.0,414.8 157.9,402.3 158.8,407.1 159.7,425.9 160.6,411.5 161.5,404.7 162.4,398.6 163.3,389.9 164.2,408.1 165.1,406.4 166.0,407.9 166.9,421.5 167.8,432.2 168.7,408.6 169.6,415.0 170.5,414.0 171.4,411.5 172.3,410.9 173.2,405.9 174.1,416.9 175.0,413.4 175.9,409.5 176.8,415.3 177.7,414.6 178.6,410.5 179.5,407.6 180.4,418.1 181.3,412.3 182.2,405.5 183.1,396.8 184.0,397.9 184.9,421.5 185.8,450.0 186.7,423.7 187.6,389.7 188.5,400.2 189.4,410.3 190.3,410.6 191.2,402.1 192.1,417.1 193.0,407.0 193.9,398.9 194.8,396.9 195.7,405.3 196.6,416.6 197.5,422.5 198.4,416.9 199.3,403.9 200.2,403.4 201.1,401.2 202.0,406.6 202.9,396.0 203.8,407.4 204.7,398.8 205.6,381.0 206.5,403.3 207.4,408.8 208.3,400.9 209.2,404.4 210.1,420.6 211.0,425.9 211.9,415.5 212.8,425.2 213.7,415.9 214.6,427.3 215.5,423.3 216.4,414.0 217.3,420.5 218.2,410.3 219.1,405.2 220.0,399.3 220.9,411.2 221.8,413.2 222.7,414.4 223.6,412.8 224.5,428.1 225.4,418.9 226.3,413.2 227.2,427.4 228.1,434.2 229.0,428.6 229.9,409.4 230.8,411.1 231.7,421.6 232.6,421.1 233.5,433.5 234.4,414.5 235.3,423.5 236.2,416.8 237.1,429.7 238.0,423.6 238.9,430.2 239.8,419.3 240.7,409.0 241.6,407.3 242.5,410.3 243.4,408.1 244.3,425.5 245.2,433.1 246.1,427.0 247.0,413.1 248.0,415.3 248.9,410.8 249.8,426.1 250.7,422.7 251.6,422.1 252.5,414.3 253.4,397.2 254.3,400.6 255.2,398.7 256.1,409.9 257.0,412.1 257.9,405.5 258.8,406.1 259.7,422.8 260.6,408.6 261.5,403.1 262.4,406.5 263.3,403.7 264.2,405.3 265.1,414.3 266.0,427.8 266.9,404.4 267.8,409.8 268.7,412.4 269.6,412.6 270.5,411.6 271.4,410.1 272.3,420.3 273.2,412.2 274.1,411.5 275.0,412.2 275.9,413.6 276.8,411.8 277.7,420.5 278.6,416.0 279.5,415.8 280.4,414.5 281.3,407.1 282.2,405.7 283.1,404.5 284.0,415.0 284.9,412.1 285.8,408.7 286.7,418.3 287.6,424.9 288.5,408.8 289.4,430.9 290.3,425.9 291.2,422.6 292.1,430.5 293.0,425.3 293.9,417.4 294.8,436.7 295.7,417.8 296.6,418.2 297.5,425.8 298.4,413.5 299.3,416.6 300.2,422.6 301.1,441.7 302.0,422.9 302.9,422.6 303.8,428.1 304.7,426.0 305.6,414.8 306.5,423.4 307.4,425.4 308.3,428.6 309.2,435.2 310.1,436.9 311.0,432.8 311.9,430.1 312.8,417.4 313.7,420.5 314.6,424.6 315.5,421.1 316.4,423.9 317.3,417.7 318.2,434.4 319.1,446.3 320.0,429.7 320.9,429.2 321.8,423.5 322.7,432.9 323.6,429.3 324.5,424.5 325.4,419.7 326.3,420.2 327.2,410.6 328.1,420.2 329.0,412.1 329.9,418.6 330.8,418.2 331.7,426.1 332.6,419.7 333.5,426.0 334.4,412.8 335.3,420.4 336.2,416.9 337.1,419.2 338.0,419.2 338.9,426.7 339.8,405.6 340.7,416.3 341.6,405.7 342.5,424.2 343.4,405.3 344.4,405.6 345.3,400.1 346.2,424.8 347.1,410.2 348.0,416.0 348.9,412.8 349.8,400.9 350.7,407.6 351.6,418.5 352.5,415.5 353.4,423.0 354.3,415.0 355.2,415.1 356.1,411.3 357.0,415.9 357.9,430.0 358.8,422.6 359.7,418.4 360.6,410.1 361.5,405.3 362.4,421.6 363.3,406.8 364.2,402.4 365.1,406.9 366.0,405.8 366.9,424.6 367.8,396.5 368.7,407.6 369.6,414.6 370.5,402.1 371.4,400.9 372.3,408.8 373.2,421.4 374.1,405.8 375.0,394.0 375.9,410.2 376.8,421.2 377.7,410.0 378.6,390.6 379.5,412.6 380.4,408.6 381.3,417.9 382.2,411.5 383.1,406.7 384.0,404.3 384.9,419.2 385.8,425.5 386.7,398.8 387.6,398.9 388.5,421.3 389.4,413.0 390.3,401.8 391.2,408.7 392.1,411.3 393.0,412.5 393.9,410.4 394.8,411.6 395.7,411.4 396.6,417.6 397.5,411.2 398.4,413.1 399.3,415.5 400.2,428.4 401.1,425.8 402.0,421.1 402.9,424.2 403.8,424.4 404.7,430.2 405.6,427.4 406.5,436.5 407.4,436.2 408.3,424.4 409.2,416.4 410.1,423.2 411.0,422.8 411.9,417.7 412.8,403.9 413.7,395.7 414.6,410.2 415.5,419.6 416.4,423.8 417.3,408.4 418.2,421.5 419.1,414.2 420.0,419.0 420.9,421.5 421.8,412.4 422.7,410.9 423.6,398.1 424.5,402.1 425.4,396.4 426.3,412.2 427.2,415.1 428.1,422.8 429.0,421.0 429.9,411.4 430.8,415.2 431.7,410.3 432.6,416.2 433.5,415.6 434.4,404.0 435.3,407.6 436.2,409.0 437.1,406.4 438.0,415.2 438.9,425.6 439.8,412.8 440.8,408.3 441.7,391.1 442.6,402.1 443.5,404.5 444.4,391.7 445.3,407.5 446.2,416.9 447.1,410.9 448.0,411.8 448.9,408.2 449.8,421.4 450.7,408.5 451.6,414.1 452.5,435.4 453.4,428.5 454.3,429.5 455.2,425.5 456.1,415.6 457.0,421.4 457.9,427.2 458.8,418.3 459.7,425.8 460.6,436.2 461.5,438.8 462.4,418.0 463.3,414.6 464.2,408.0 465.1,426.9 466.0,430.3 466.9,432.6 467.8,419.7 468.7,411.8 469.6,418.4 470.5,420.7 471.4,413.3 472.3,418.1 473.2,423.9 474.1,421.8 475.0,410.3 475.9,396.6 476.8,406.0 477.7,412.9 478.6,411.9 479.5,410.2 480.4,407.4 481.3,417.6 482.2,415.6 483.1,416.8 484.0,408.4 484.9,408.4 485.8,415.2 486.7,408.7 487.6,404.7 488.5,411.2 489.4,426.5 490.3,424.7 491.2,434.5 492.1,425.6 493.0,420.8 493.9,409.5 494.8,411.4 495.7,428.0 496.6,425.6 497.5,426.9 498.4,426.7 499.3,420.1 500.2,414.9 501.1,415.1 502.0,419.1 502.9,418.3 503.8,418.3 504.7,415.1 505.6,405.9 506.5,406.6 507.4,401.2 508.3,415.3 509.2,395.9 510.1,404.3 511.0,429.5 511.9,417.6 512.8,407.0 513.7,412.5 514.6,425.5 515.5,419.7 516.4,424.1 517.3,422.1 518.2,417.7 519.1,444.7 520.0,430.7 520.9,420.0 521.8,415.8 522.7,420.9 523.6,422.9 524.5,426.0 525.4,421.5 526.3,406.2 527.2,415.6 528.1,411.8 529.0,409.7 529.9,398.5 530.8,400.6 531.7,400.1 532.6,405.1 533.5,395.6 534.4,404.0 535.3,408.2 536.2,399.7 537.2,401.1 538.1,400.1 539.0,414.6 539.9,392.6 540.8,402.3 541.7,395.5 542.6,403.0 543.5,416.4 544.4,409.3 545.3,412.7 546.2,405.2 547.1,424.3 548.0,423.0 548.9,423.5 549.8,402.8 550.7,395.4 551.6,410.2 552.5,405.4 553.4,403.1 554.3,406.7 555.2,395.9 556.1,408.8 557.0,408.8 557.9,413.2 558.8,407.0 559.7,414.8 560.6,409.0 561.5,421.5 562.4,428.6 563.3,430.4 564.2,428.2 565.1,428.4 566.0,400.7 566.9,419.1 567.8,416.9 568.7,418.8 569.6,416.2 570.5,405.8 571.4,408.4 572.3,419.2 573.2,430.0 574.1,417.3 575.0,410.3 575.9,427.1 576.8,415.1 577.7,434.4 578.6,426.0 579.5,415.6 580.4,426.5 581.3,436.9 582.2,415.6 583.1,431.1 584.0,421.9 584.9,432.4 585.8,421.1 586.7,406.5 587.6,417.1 588.5,424.9 589.4,436.5 590.3,438.0 591.2,430.1 592.1,419.2 593.0,412.4 593.9,411.4 594.8,406.6 595.7,409.2 596.6,391.7 597.5,406.9 598.4,411.4 599.3,434.9 600.2,429.9 601.1,417.8 602.0,421.5 602.9,408.8 603.8,408.7 604.7,398.7 605.6,422.2 606.5,424.8 607.4,411.4 608.3,415.2 609.2,425.2 610.1,425.5 611.0,424.6 611.9,414.5 612.8,412.0 613.7,417.1 614.6,426.1 615.5,415.4 616.4,409.1 617.3,425.3 618.2,414.9 619.1,427.6 620.0,425.8 620.9,430.6 621.8,439.4 622.7,434.2 623.6,433.0 624.5,418.0 625.4,413.7 626.3,422.1 627.2,432.0 628.1,434.1 629.0,441.9 629.9,428.2 630.8,420.6 631.7,423.7 632.6,416.3 633.6,411.8 634.5,401.6 635.4,401.0 636.3,388.0 637.2,400.8 638.1,397.3 639.0,412.9 639.9,401.8 640.8,413.0 641.7,397.7 642.6,401.2 643.5,416.0 644.4,405.7 645.3,408.9 646.2,405.6 647.1,389.7 648.0,404.3 648.9,411.2 649.8,401.2 650.7,410.9 651.6,403.3 652.5,398.2 653.4,404.9 654.3,402.1 655.2,425.3 656.1,403.7 657.0,414.1 657.9,420.6 658.8,399.5 659.7,393.7 660.6,410.2 661.5,409.2 662.4,416.7 663.3,426.5 664.2,418.3 665.1,409.8 666.0,393.4 666.9,411.0 667.8,408.9 668.7,418.7 669.6,422.3 670.5,410.7 671.4,431.8 672.3,435.1 673.2,434.8 674.1,418.2 675.0,418.1 675.9,417.0 676.8,417.4 677.7,412.0 678.6,422.3 679.5,424.6 680.4,426.9 681.3,420.6 682.2,432.8 683.1,428.4 684.0,402.7 684.9,409.2 685.8,416.6 686.7,428.4 687.6,422.5 688.5,420.5 689.4,416.9 690.3,426.3 691.2,420.7 692.1,417.4 693.0,414.7 693.9,424.3 694.8,419.2 695.7,407.1 696.6,421.0 697.5,415.2 698.4,421.1 699.3,423.0 700.2,430.1 701.1,431.1 702.0,417.2 702.9,414.2 703.8,403.2 704.7,422.3 705.6,419.4 706.5,425.5 707.4,413.9 708.3,394.3 709.2,415.1 710.1,411.9 711.0,410.4 711.9,409.2 712.8,413.6 713.7,414.7 714.6,397.2 715.5,412.1 716.4,404.4 717.3,401.9 718.2,419.0 719.1,418.7 720.0,408.2 720.9,391.5 721.8,401.1 722.7,407.7 723.6,405.3 724.5,395.2 725.4,395.0 726.3,391.4 727.2,402.7 728.1,412.7 729.0,418.7 729.9,407.3 730.9,411.7 731.8,416.7 732.7,410.6 733.6,411.8 734.5,439.2 735.4,447.0 736.3,434.5 737.2,416.8 738.1,416.9 739.0,402.4 739.9,410.2 740.8,423.4 741.7,436.0 742.6,433.1 743.5,427.6 744.4,420.0 745.3,411.7 746.2,411.5 747.1,417.2 748.0,407.9 748.9,418.0 749.8,406.2 750.7,395.0 751.6,397.0 752.5,392.2 753.4,392.6 754.3,413.1 755.2,410.4 756.1,412.9 757.0,421.7 757.9,426.7 758.8,414.3 759.7,425.0 760.6,421.9 761.5,417.8 762.4,419.7 763.3,405.2 764.2,404.7 765.1,410.3 766.0,418.4 766.9,413.8 767.8,413.6 768.7,422.6 769.6,429.6 770.5,427.0 771.4,429.9 772.3,417.0 773.2,412.7 774.1,415.9 775.0,412.0 775.9,409.2 776.8,426.0 777.7,417.4 778.6,407.6 779.5,416.1 780.4,430.7 781.3,422.6 782.2,428.6 783.1,417.6 784.0,413.3 784.9,409.9 785.8,413.3 786.7,430.8 787.6,413.4 788.5,429.4 789.4,413.9 790.3,414.2 791.2,423.0 792.1,424.8 793.0,422.4 793.9,405.2 794.8,415.1 795.7,407.2 796.6,433.3 797.5,421.3 798.4,419.4 799.3,407.8 800.2,408.6 801.1,401.9 802.0,417.7 802.9,413.4 803.8,418.4 804.7,410.0 805.6,407.7 806.5,421.0 807.4,407.6 808.3,395.1 809.2,407.7 810.1,399.4 811.0,401.1 811.9,412.6 812.8,402.6 813.7,412.3 814.6,403.4 815.5,417.3 816.4,421.7 817.3,408.7 818.2,405.6 819.1,399.4 820.0,405.3 820.9,415.6 821.8,398.6 822.7,411.0 823.6,398.1 824.5,396.7 825.4,388.6 826.3,416.9 827.3,411.8 828.2,411.2 829.1,403.4 830.0,414.5 830.9,393.1 831.8,402.3 832.7,424.1 833.6,411.6 834.5,410.0 835.4,415.1 836.3,404.9 837.2,407.9 838.1,416.8 839.0,414.1 839.9,414.2 840.8,408.6 841.7,411.7 842.6,410.6 843.5,421.4 844.4,419.8 845.3,411.4 846.2,389.5 847.1,406.9 848.0,414.6 848.9,404.6 849.8,392.3 850.7,394.8 851.6,413.5 852.5,405.6 853.4,408.0 854.3,415.5 855.2,426.6 856.1,421.9 857.0,420.0 857.9,415.2 858.8,431.4 859.7,433.0 860.6,424.1 861.5,409.6 862.4,408.0 863.3,418.1 864.2,411.0 865.1,420.7 866.0,419.8 866.9,418.5 867.8,421.0 868.7,420.9 869.6,409.2 870.5,408.9 871.4,430.8 872.3,410.5 873.2,408.8 874.1,421.3 875.0,416.3 875.9,409.1 876.8,402.3 877.7,415.3 878.6,424.3 879.5,430.7 880.4,422.8 881.3,427.7 882.2,412.3 883.1,415.9 884.0,410.2 884.9,415.0 885.8,421.7 886.7,426.8 887.6,411.9 888.5,424.3 889.4,415.0 890.3,407.0 891.2,410.9 892.1,402.7 893.0,411.3 893.9,417.1 894.8,416.0 895.7,421.8 896.6,417.1 897.5,418.3 898.4,407.3 899.3,414.9 900.2,410.8 901.1,412.4 902.0,415.8 902.9,419.3 903.8,405.2 904.7,400.0 905.6,408.2 906.5,417.8 907.4,420.6 908.3,425.7 909.2,430.8 910.1,426.5 911.0,420.5 911.9,409.3 912.8,405.6 913.7,408.2 914.6,415.2 915.5,417.5 916.4,416.8 917.3,414.7 918.2,420.4 919.1,418.9 920.0,418.8 920.9,418.8 921.8,412.0 922.7,404.9 923.7,414.9 924.6,418.1 925.5,414.3 926.4,411.8 927.3,432.6 928.2,416.2 929.1,414.1 930.0,417.5 930.9,407.3 931.8,413.9 932.7,429.9 933.6,428.9 934.5,426.0 935.4,423.7 936.3,418.7 937.2,422.8 938.1,414.9 939.0,408.7 939.9,410.3 940.8,416.8 941.7,414.5 942.6,416.2 943.5,394.2 944.4,411.7 945.3,428.5 946.2,427.0 947.1,413.3 948.0,403.4 948.9,409.4 949.8,402.4 950.7,413.7 951.6,408.6 952.5,419.1 953.4,426.9 954.3,402.4 955.2,412.0 956.1,407.7 957.0,399.9 957.9,403.2 958.8,407.4 959.7,419.2 960.6,402.6 961.5,416.2 962.4,429.1 963.3,422.0 964.2,417.9 965.1,411.0 966.0,398.4 966.9,406.7 967.8,408.4 968.7,411.4 969.6,427.7 970.5,419.1 971.4,412.4 972.3,419.1 973.2,398.0 974.1,391.5 975.0,395.4 975.9,394.9 976.8,406.3 977.7,403.0 978.6,419.2 979.5,424.6 980.4,421.1 981.3,410.9 982.2,415.9 983.1,420.3 984.0,407.6 984.9,414.8 985.8,421.7 986.7,421.2 987.6,432.9 988.5,435.0 989.4,419.7 990.3,421.6 991.2,414.5 992.1,422.8 993.0,414.3 993.9,425.0 994.8,424.3 995.7,428.1 996.6,419.8 997.5,405.3 998.4,425.2 999.3,416.4 1000.2,424.7 1001.1,419.8 1002.0,419.6 1002.9,428.4 1003.8,419.6 1004.7,424.6 1005.6,403.1 1006.5,413.7 1007.4,408.8 1008.3,407.3 1009.2,408.0 1010.1,410.7 1011.0,422.4 1011.9,398.4 1012.8,404.2 1013.7,400.4 1014.6,414.3 1015.5,407.0 1016.4,411.4 1017.3,406.4 1018.2,413.3 1019.1,419.0 1020.1,410.1 1021.0,410.6 1021.9,399.4 1022.8,409.6 1023.7,418.6 1024.6,410.8 1025.5,422.0 1026.4,400.3 1027.3,393.5 1028.2,394.5 1029.1,402.2 1030.0,409.2 1030.9,411.1 1031.8,411.7 1032.7,418.5 1033.6,410.5 1034.5,400.3 1035.4,395.7 1036.3,420.8 1037.2,393.9 1038.1,399.7 1039.0,414.9 1039.9,412.3 1040.8,400.0 1041.7,401.5 1042.6,408.3 1043.5,413.9 1044.4,398.5 1045.3,405.6 1046.2,404.8 1047.1,411.7 1048.0,417.1 1048.9,406.0 1049.8,393.2 1050.7,404.3 1051.6,421.2 1052.5,419.8 1053.4,416.6 1054.3,434.0 1055.2,413.3 1056.1,421.8 1057.0,413.6 1057.9,416.0 1058.8,417.4 1059.7,429.7 1060.6,414.7 1061.5,411.5 1062.4,401.3 1063.3,414.0 1064.2,411.3 1065.1,417.5 1066.0,407.3 1066.9,409.4 1067.8,422.3 1068.7,417.3 1069.6,422.7 1070.5,424.9 1071.4,419.0 1072.3,407.9 1073.2,425.0 1074.1,425.9 1075.0,434.0 1075.9,413.1 1076.8,408.3 1077.7,403.0 1078.6,411.8 1079.5,431.1 1080.4,434.8 1081.3,431.4 1082.2,431.1 1083.1,435.7 1084.0,428.5 1084.9,430.5 1085.8,428.4 1086.7,407.8 1087.6,413.6 1088.5,430.0 1089.4,421.6 1090.3,419.9 1091.2,415.4 1092.1,414.4 1093.0,427.0 1093.9,421.0 1094.8,412.5 1095.7,392.4 1096.6,405.7 1097.5,399.6 1098.4,398.7 1099.3,419.7 1100.2,427.6 1101.1,408.8 1102.0,423.8 1102.9,426.3 1103.8,416.6 1104.7,424.3 1105.6,407.6 1106.5,403.4 1107.4,398.9 1108.3,398.8 1109.2,414.6 1110.1,401.7 1111.0,397.3 1111.9,396.9 1112.8,405.5 1113.7,404.5 1114.6,413.9 1115.5,405.1 1116.5,397.2 1117.4,401.0 1118.3,407.4 1119.2,403.0 1120.1,411.9 1121.0,428.8 1121.9,416.8 1122.8,418.1 1123.7,429.9 1124.6,418.7 1125.5,412.8 1126.4,408.5 1127.3,418.9 1128.2,423.7 1129.1,419.7 1130.0,419.0 1130.9,428.0 1131.8,427.2 1132.7,408.2 1133.6,411.2 1134.5,412.9 1135.4,418.6 1136.3,412.7 1137.2,406.6 1138.1,406.0 1139.0,394.6 1139.9,404.8 1140.8,405.0 1141.7,414.0 1142.6,406.0 1143.5,407.9 1144.4,404.3 1145.3,401.8 1146.2,415.4 1147.1,411.4 1148.0,417.5 1148.9,406.8 1149.8,412.4 1150.7,399.9 1151.6,404.9 1152.5,406.5 1153.4,415.9 1154.3,416.3 1155.2,413.3 1156.1,420.1 1157.0,417.4 1157.9,418.8 1158.8,421.4 1159.7,415.3 1160.6,410.6 1161.5,413.8 1162.4,408.3 1163.3,412.0 1164.2,418.8 1165.1,419.3 1166.0,409.2 1166.9,397.7 1167.8,403.4 1168.7,405.0 1169.6,415.7 1170.5,407.9 1171.4,407.1 1172.3,415.1 1173.2,409.0 1174.1,409.9 1175.0,426.6 1175.9,432.2 1176.8,427.7 1177.7,423.5 1178.6,412.3 1179.5,420.5 1180.4,419.7 1181.3,420.5 1182.2,414.5 1183.1,415.7 1184.0,414.2 1184.9,416.8 1185.8,426.2 1186.7,420.3 1187.6,400.0 1188.5,396.8 1189.4,389.7 1190.3,392.4 1191.2,404.2 1192.1,407.5 1193.0,400.5 1193.9,404.3 1194.8,397.6 1195.7,389.6 1196.6,386.9 1197.5,390.6 1198.4,410.9 1199.3,397.6 1200.2,413.7 1201.1,421.3 1202.0,412.4 1202.9,410.5 1203.8,405.4 1204.7,408.7 1205.6,416.0 1206.5,413.4 1207.4,421.0 1208.3,425.9 1209.2,421.6 1210.1,419.9 1211.0,416.0 1211.9,418.1 1212.9,407.1 1213.8,415.0 1214.7,416.2 1215.6,408.3 1216.5,430.1 1217.4,413.2 1218.3,407.0 1219.2,414.2 1220.1,398.7 1221.0,401.8 1221.9,396.5 1222.8,399.3 1223.7,407.4 1224.6,414.5 1225.5,424.0 1226.4,425.3 1227.3,429.2 1228.2,425.6 1229.1,416.5 1230.0,425.7 1230.9,416.1 1231.8,411.1 1232.7,426.9 1233.6,427.6 1234.5,423.1 1235.4,425.7 1236.3,428.0 1237.2,410.2 1238.1,413.2 1239.0,405.4 1239.9,412.8 1240.8,409.3 1241.7,424.1 1242.6,423.4 1243.5,412.0 1244.4,414.1 1245.3,404.7 1246.2,411.1 1247.1,417.8 1248.0,417.9 1248.9,400.3 1249.8,406.0 1250.7,415.8 1251.6,417.8 1252.5,425.8 1253.4,409.2 1254.3,417.3 1255.2,411.1 1256.1,415.5 1257.0,419.1 1257.9,423.0 1258.8,414.5 1259.7,417.6 1260.6,407.9 1261.5,401.8 1262.4,415.6 1263.3,416.1 1264.2,403.8 1265.1,405.2 1266.0,413.0 1266.9,428.9 1267.8,431.1 1268.7,430.1 1269.6,408.5 1270.5,413.8 1271.4,420.5 1272.3,422.7 1273.2,423.5 1274.1,418.3 1275.0,432.3 1275.9,435.8 1276.8,424.1 1277.7,411.6 1278.6,431.4 1279.5,417.4 1280.4,425.4 1281.3,434.0 1282.2,413.4 1283.1,414.7 1284.0,409.7 1284.9,414.1 1285.8,413.6 1286.7,425.9 1287.6,419.3 1288.5,411.5 1289.4,417.4 1290.3,408.4 1291.2,404.3 1292.1,423.5 1293.0,406.6 1293.9,402.5 1294.8,405.7 1295.7,398.0 1296.6,387.0 1297.5,408.7 1298.4,402.2 1299.3,402.1 1300.2,403.6 1301.1,399.0 1302.0,396.8 1302.9,406.2 1303.8,427.9 1304.7,423.0 1305.6,421.0 1306.5,401.6 1307.4,406.1 1308.3,398.2 1309.3,411.5 1310.2,408.8 1311.1,409.6 1312.0,409.1 1312.9,405.2 1313.8,396.1 1314.7,410.4 1315.6,400.3 1316.5,398.5 1317.4,405.1 1318.3,405.2 1319.2,413.2 1320.1,422.9 1321.0,421.0 1321.9,419.9 1322.8,418.4 1323.7,424.9 1324.6,405.1 1325.5,415.8 1326.4,409.3 1327.3,404.3 1328.2,412.4 1329.1,412.8 1330.0,420.7 1330.9,428.7 1331.8,403.5 1332.7,412.4 1333.6,433.1 1334.5,433.1 1335.4,437.8 1336.3,429.5 1337.2,414.2 1338.1,411.0 1339.0,424.8 1339.9,433.1 1340.8,422.4 1341.7,421.9 1342.6,426.2 1343.5,410.9 1344.4,416.3 1345.3,433.9 1346.2,445.1 1347.1,430.3 1348.0,439.5 1348.9,423.5 1349.8,414.0 1350.7,398.0 1351.6,417.5 1352.5,414.4 1353.4,435.4 1354.3,427.5 1355.2,423.3 1356.1,405.3 1357.0,425.5"/>
<line x1="6" y1="414.5" x2="1358" y2="414.5" stroke="#c0b4b4" stroke-width="1" opacity="0.8"/>
<rect x="11.4" y="243" width="0.9" height="6.5" fill="#9a9a9a"/>
<text x="12.8" y="0" transform="translate(0 249.3) scale(1 1.28)" fill="#b4b4b4" font-family="Liberation Mono" font-size="7.5">01:56</text>
<rect x="100.3" y="243" width="0.9" height="6.5" fill="#9a9a9a"/>
<text x="101.7" y="0" transform="translate(0 249.3) scale(1 1.28)" fill="#b4b4b4" font-family="Liberation Mono" font-size="7.5">01:58</text>
<rect x="189.1" y="243" width="0.9" height="6.5" fill="#9a9a9a"/>
<text x="190.5" y="0" transform="translate(0 249.3) scale(1 1.28)" fill="#b4b4b4" font-family="Liberation Mono" font-size="7.5">02:00</text>
<rect x="278.0" y="243" width="0.9" height="6.5" fill="#9a9a9a"/>
<text x="279.4" y="0" transform="translate(0 249.3) scale(1 1.28)" fill="#b4b4b4" font-family="Liberation Mono" font-size="7.5">02:02</text>
<rect x="366.9" y="243" width="0.9" height="6.5" fill="#9a9a9a"/>
<text x="368.3" y="0" transform="translate(0 249.3) scale(1 1.28)" fill="#b4b4b4" font-family="Liberation Mono" font-size="7.5">02:04</text>
<rect x="455.8" y="243" width="0.9" height="6.5" fill="#9a9a9a"/>
<text x="457.1" y="0" transform="translate(0 249.3) scale(1 1.28)" fill="#b4b4b4" font-family="Liberation Mono" font-size="7.5">02:06</text>
<rect x="544.6" y="243" width="0.9" height="6.5" fill="#9a9a9a"/>
<text x="546.0" y="0" transform="translate(0 249.3) scale(1 1.28)" fill="#b4b4b4" font-family="Liberation Mono" font-size="7.5">02:08</text>
<rect x="633.5" y="243" width="0.9" height="6.5" fill="#9a9a9a"/>
<text x="634.9" y="0" transform="translate(0 249.3) scale(1 1.28)" fill="#b4b4b4" font-family="Liberation Mono" font-size="7.5">02:10</text>
<rect x="722.4" y="243" width="0.9" height="6.5" fill="#9a9a9a"/>
<text x="723.8" y="0" transform="translate(0 249.3) scale(1 1.28)" fill="#b4b4b4" font-family="Liberation Mono" font-size="7.5">02:12</text>
<rect x="811.2" y="243" width="0.9" height="6.5" fill="#9a9a9a"/>
<text x="812.6" y="0" transform="translate(0 249.3) scale(1 1.28)" fill="#b4b4b4" font-family="Liberation Mono" font-size="7.5">02:14</text>
<rect x="900.1" y="243" width="0.9" height="6.5" fill="#9a9a9a"/>
<text x="901.5" y="0" transform="translate(0 249.3) scale(1 1.28)" fill="#b4b4b4" font-family="Liberation Mono" font-size="7.5">02:16</text>
<rect x="989.0" y="243" width="0.9" height="6.5" fill="#9a9a9a"/>
<text x="990.4" y="0" transform="translate(0 249.3) scale(1 1.28)" fill="#b4b4b4" font-family="Liberation Mono" font-size="7.5">02:18</text>
<rect x="1077.8" y="243" width="0.9" height="6.5" fill="#9a9a9a"/>
<text x="1079.2" y="0" transform="translate(0 249.3) scale(1 1.28)" fill="#b4b4b4" font-family="Liberation Mono" font-size="7.5">02:20</text>
<rect x="1166.7" y="243" width="0.9" height="6.5" fill="#9a9a9a"/>
<text x="1168.1" y="0" transform="translate(0 249.3) scale(1 1.28)" fill="#b4b4b4" font-family="Liberation Mono" font-size="7.5">02:22</text>
<text x="6" y="0" transform="translate(0 261.9) scale(1 1.28)" fill="#b4b4b4" font-family="Liberation Mono" font-size="7.5">7.5"</text>
<text x="6" y="0" transform="translate(0 315.1) scale(1 1.28)" fill="#b4b4b4" font-family="Liberation Mono" font-size="7.5">5"</text>
<text x="6" y="0" transform="translate(0 368.2) scale(1 1.28)" fill="#b4b4b4" font-family="Liberation Mono" font-size="7.5">2.5"</text>
<text x="6" y="0" transform="translate(0 474.4) scale(1 1.28)" fill="#b4b4b4" font-family="Liberation Mono" font-size="7.5">-2.5"</text>
<text x="6" y="0" transform="translate(0 527.5) scale(1 1.28)" fill="#b4b4b4" font-family="Liberation Mono" font-size="7.5">-5"</text>
<text x="6" y="0" transform="translate(0 580.6) scale(1 1.28)" fill="#b4b4b4" font-family="Liberation Mono" font-size="7.5">-7.5"</text>
<text x="7.6" y="0" transform="translate(0 569.6) scale(1 1.2)" fill="#c4c4c4" font-family="Liberation Mono" font-size="7.3">Settling complete</text>
<text x="5" y="0" transform="translate(0 581.5) scale(1 1.2)" fill="#c4c4c4" font-family="Liberation Mono" font-size="7.3">Settling started</text>
<rect x="1224.1" y="242" width="142.3" height="142" fill="#030203" stroke="#9a9a9a" stroke-width="1"/>
<line x1="1296.5" y1="242" x2="1296.5" y2="384" stroke="#767676"/>
<line x1="1224" y1="313.5" x2="1366" y2="313.5" stroke="#767676"/>
<g fill="#d8d830"><rect x="1302.8" y="312.8" width="1.2" height="1.2"/><rect x="1302.5" y="321.0" width="1.2" height="1.2"/><rect x="1297.2" y="319.8" width="1.2" height="1.2"/><rect x="1298.8" y="306.4" width="1.2" height="1.2"/><rect x="1292.9" y="312.8" width="1.2" height="1.2"/><rect x="1300.4" y="310.6" width="1.2" height="1.2"/><rect x="1293.2" y="310.1" width="1.2" height="1.2"/><rect x="1296.2" y="315.1" width="1.2" height="1.2"/><rect x="1303.8" y="318.6" width="1.2" height="1.2"/><rect x="1297.7" y="315.9" width="1.2" height="1.2"/><rect x="1297.3" y="315.3" width="1.2" height="1.2"/><rect x="1308.1" y="302.8" width="1.2" height="1.2"/><rect x="1295.2" y="316.3" width="1.2" height="1.2"/><rect x="1305.0" y="309.5" width="1.2" height="1.2"/><rect x="1299.1" y="318.9" width="1.2" height="1.2"/><rect x="1293.1" y="305.6" width="1.2" height="1.2"/><rect x="1293.8" y="309.0" width="1.2" height="1.2"/><rect x="1301.4" y="310.7" width="1.2" height="1.2"/><rect x="1309.8" y="315.4" width="1.2" height="1.2"/><rect x="1290.4" y="312.3" width="1.2" height="1.2"/><rect x="1288.3" y="316.6" width="1.2" height="1.2"/><rect x="1307.7" y="313.7" width="1.2" height="1.2"/><rect x="1303.4" y="310.2" width="1.2" height="1.2"/><rect x="1298.8" y="325.8" width="1.2" height="1.2"/><rect x="1285.9" y="320.7" width="1.2" height="1.2"/><rect x="1305.3" y="305.7" width="1.2" height="1.2"/><rect x="1285.7" y="310.1" width="1.2" height="1.2"/><rect x="1303.7" y="312.7" width="1.2" height="1.2"/><rect x="1295.2" y="318.2" width="1.2" height="1.2"/><rect x="1297.4" y="315.9" width="1.2" height="1.2"/><rect x="1294.1" y="320.2" width="1.2" height="1.2"/><rect x="1290.6" y="322.8" width="1.2" height="1.2"/><rect x="1293.9" y="310.9" width="1.2" height="1.2"/><rect x="1301.3" y="316.9" width="1.2" height="1.2"/><rect x="1281.6" y="315.8" width="1.2" height="1.2"/><rect x="1286.3" y="310.8" width="1.2" height="1.2"/><rect x="1302.4" y="310.6" width="1.2" height="1.2"/><rect x="1299.1" y="312.9" width="1.2" height="1.2"/><rect x="1310.9" y="314.3" width="1.2" height="1.2"/><rect x="1287.6" y="309.4" width="1.2" height="1.2"/><rect x="1289.6" y="315.4" width="1.2" height="1.2"/><rect x="1296.4" y="319.4" width="1.2" height="1.2"/><rect x="1297.7" y="315.3" width="1.2" height="1.2"/><rect x="1298.8" y="314.1" width="1.2" height="1.2"/><rect x="1298.6" y="318.5" width="1.2" height="1.2"/><rect x="1302.3" y="312.1" width="1.2" height="1.2"/><rect x="1283.1" y="310.8" width="1.2" height="1.2"/><rect x="1298.5" y="302.8" width="1.2" height="1.2"/><rect x="1292.8" y="316.9" width="1.2" height="1.2"/><rect x="1292.1" y="309.3" width="1.2" height="1.2"/><rect x="1309.5" y="321.3" width="1.2" height="1.2"/><rect x="1294.4" y="321.0" width="1.2" height="1.2"/><rect x="1306.1" y="309.3" width="1.2" height="1.2"/><rect x="1316.5" y="310.2" width="1.2" height="1.2"/><rect x="1294.4" y="309.4" width="1.2" height="1.2"/><rect x="1296.9" y="308.4" width="1.2" height="1.2"/><rect x="1296.3" y="319.9" width="1.2" height="1.2"/><rect x="1297.9" y="313.4" width="1.2" height="1.2"/><rect x="1307.9" y="310.4" width="1.2" height="1.2"/><rect x="1303.6" y="313.2" width="1.2" height="1.2"/><rect x="1297.9" y="314.8" width="1.2" height="1.2"/><rect x="1297.3" y="314.4" width="1.2" height="1.2"/><rect x="1290.4" y="311.9" width="1.2" height="1.2"/><rect x="1299.6" y="314.1" width="1.2" height="1.2"/><rect x="1287.5" y="311.2" width="1.2" height="1.2"/><rect x="1291.1" y="314.4" width="1.2" height="1.2"/><rect x="1297.6" y="315.1" width="1.2" height="1.2"/><rect x="1291.3" y="314.7" width="1.2" height="1.2"/><rect x="1286.0" y="300.8" width="1.2" height="1.2"/><rect x="1295.8" y="306.7" width="1.2" height="1.2"/><rect x="1289.1" y="308.8" width="1.2" height="1.2"/><rect x="1300.9" y="308.8" width="1.2" height="1.2"/><rect x="1298.2" y="312.2" width="1.2" height="1.2"/><rect x="1286.9" y="307.0" width="1.2" height="1.2"/><rect x="1299.6" y="316.4" width="1.2" height="1.2"/><rect x="1301.9" y="323.3" width="1.2" height="1.2"/><rect x="1298.1" y="315.9" width="1.2" height="1.2"/><rect x="1295.2" y="315.0" width="1.2" height="1.2"/><rect x="1293.4" y="310.2" width="1.2" height="1.2"/><rect x="1311.0" y="305.6" width="1.2" height="1.2"/><rect x="1297.9" y="316.6" width="1.2" height="1.2"/><rect x="1297.1" y="309.9" width="1.2" height="1.2"/><rect x="1294.6" y="312.3" width="1.2" height="1.2"/><rect x="1287.9" y="314.2" width="1.2" height="1.2"/><rect x="1292.9" y="311.8" width="1.2" height="1.2"/><rect x="1301.1" y="309.3" width="1.2" height="1.2"/><rect x="1299.2" y="311.5" width="1.2" height="1.2"/><rect x="1299.1" y="314.7" width="1.2" height="1.2"/><rect x="1297.7" y="309.7" width="1.2" height="1.2"/><rect x="1290.1" y="310.3" width="1.2" height="1.2"/><rect x="1297.2" y="318.0" width="1.2" height="1.2"/><rect x="1304.0" y="312.0" width="1.2" height="1.2"/><rect x="1296.5" y="306.6" width="1.2" height="1.2"/><rect x="1279.3" y="310.2" width="1.2" height="1.2"/><rect x="1290.9" y="306.9" width="1.2" height="1.2"/><rect x="1282.5" y="316.9" width="1.2" height="1.2"/><rect x="1289.8" y="306.3" width="1.2" height="1.2"/><rect x="1313.2" y="315.2" width="1.2" height="1.2"/><rect x="1293.4" y="317.6" width="1.2" height="1.2"/><rect x="1290.1" y="321.9" width="1.2" height="1.2"/><rect x="1284.3" y="308.1" width="1.2" height="1.2"/><rect x="1294.7" y="310.6" width="1.2" height="1.2"/><rect x="1306.3" y="306.6" width="1.2" height="1.2"/><rect x="1290.3" y="315.4" width="1.2" height="1.2"/><rect x="1299.9" y="319.1" width="1.2" height="1.2"/><rect x="1298.3" y="324.8" width="1.2" height="1.2"/><rect x="1292.1" y="315.1" width="1.2" height="1.2"/><rect x="1302.1" y="312.7" width="1.2" height="1.2"/><rect x="1293.5" y="312.0" width="1.2" height="1.2"/><rect x="1290.8" y="308.8" width="1.2" height="1.2"/><rect x="1291.5" y="306.8" width="1.2" height="1.2"/><rect x="1298.5" y="306.6" width="1.2" height="1.2"/><rect x="1311.0" y="322.3" width="1.2" height="1.2"/><rect x="1303.9" y="313.2" width="1.2" height="1.2"/><rect x="1291.2" y="320.1" width="1.2" height="1.2"/><rect x="1296.9" y="316.9" width="1.2" height="1.2"/><rect x="1290.2" y="319.3" width="1.2" height="1.2"/><rect x="1289.6" y="314.7" width="1.2" height="1.2"/><rect x="1282.6" y="311.0" width="1.2" height="1.2"/><rect x="1299.3" y="312.0" width="1.2" height="1.2"/><rect x="1292.2" y="317.9" width="1.2" height="1.2"/><rect x="1295.0" y="320.1" width="1.2" height="1.2"/><rect x="1277.5" y="316.9" width="1.2" height="1.2"/><rect x="1299.3" y="306.8" width="1.2" height="1.2"/><rect x="1285.8" y="318.4" width="1.2" height="1.2"/><rect x="1287.5" y="311.1" width="1.2" height="1.2"/><rect x="1300.0" y="312.6" width="1.2" height="1.2"/><rect x="1299.1" y="310.0" width="1.2" height="1.2"/><rect x="1297.7" y="319.3" width="1.2" height="1.2"/><rect x="1297.9" y="303.7" width="1.2" height="1.2"/><rect x="1300.4" y="314.4" width="1.2" height="1.2"/><rect x="1288.7" y="320.8" width="1.2" height="1.2"/><rect x="1282.5" y="323.1" width="1.2" height="1.2"/><rect x="1290.8" y="321.7" width="1.2" height="1.2"/><rect x="1295.2" y="307.8" width="1.2" height="1.2"/><rect x="1296.2" y="315.7" width="1.2" height="1.2"/><rect x="1299.5" y="319.2" width="1.2" height="1.2"/><rect x="1288.8" y="316.5" width="1.2" height="1.2"/><rect x="1301.0" y="312.8" width="1.2" height="1.2"/><rect x="1288.5" y="309.6" width="1.2" height="1.2"/><rect x="1301.1" y="318.0" width="1.2" height="1.2"/><rect x="1289.3" y="307.7" width="1.2" height="1.2"/><rect x="1304.7" y="306.7" width="1.2" height="1.2"/><rect x="1296.7" y="310.3" width="1.2" height="1.2"/><rect x="1282.4" y="314.7" width="1.2" height="1.2"/><rect x="1294.1" y="321.0" width="1.2" height="1.2"/><rect x="1312.4" y="313.2" width="1.2" height="1.2"/><rect x="1303.1" y="319.1" width="1.2" height="1.2"/><rect x="1291.6" y="310.0" width="1.2" height="1.2"/><rect x="1307.5" y="312.4" width="1.2" height="1.2"/><rect x="1295.3" y="312.7" width="1.2" height="1.2"/><rect x="1294.5" y="311.2" width="1.2" height="1.2"/><rect x="1301.1" y="320.1" width="1.2" height="1.2"/><rect x="1292.7" y="307.5" width="1.2" height="1.2"/><rect x="1295.9" y="307.0" width="1.2" height="1.2"/><rect x="1290.7" y="320.0" width="1.2" height="1.2"/><rect x="1312.8" y="315.9" width="1.2" height="1.2"/><rect x="1287.5" y="317.9" width="1.2" height="1.2"/><rect x="1278.7" y="310.8" width="1.2" height="1.2"/><rect x="1306.8" y="317.7" width="1.2" height="1.2"/><rect x="1285.2" y="306.2" width="1.2" height="1.2"/><rect x="1301.9" y="313.9" width="1.2" height="1.2"/><rect x="1291.0" y="316.1" width="1.2" height="1.2"/><rect x="1291.2" y="305.0" width="1.2" height="1.2"/><rect x="1301.5" y="311.0" width="1.2" height="1.2"/><rect x="1288.0" y="307.8" width="1.2" height="1.2"/><rect x="1297.3" y="310.3" width="1.2" height="1.2"/><rect x="1300.1" y="312.9" width="1.2" height="1.2"/><rect x="1303.5" y="312.3" width="1.2" height="1.2"/><rect x="1290.6" y="304.7" width="1.2" height="1.2"/><rect x="1287.3" y="317.6" width="1.2" height="1.2"/><rect x="1318.3" y="308.2" width="1.2" height="1.2"/><rect x="1287.7" y="315.7" width="1.2" height="1.2"/><rect x="1299.0" y="310.9" width="1.2" height="1.2"/><rect x="1296.1" y="306.5" width="1.2" height="1.2"/><rect x="1293.3" y="318.4" width="1.2" height="1.2"/><rect x="1307.7" y="313.3" width="1.2" height="1.2"/><rect x="1293.6" y="316.3" width="1.2" height="1.2"/><rect x="1303.7" y="316.5" width="1.2" height="1.2"/><rect x="1289.9" y="315.8" width="1.2" height="1.2"/><rect x="1302.7" y="310.7" width="1.2" height="1.2"/><rect x="1285.5" y="316.6" width="1.2" height="1.2"/><rect x="1298.2" y="318.8" width="1.2" height="1.2"/><rect x="1296.2" y="311.1" width="1.2" height="1.2"/><rect x="1292.2" y="309.2" width="1.2" height="1.2"/><rect x="1288.4" y="311.5" width="1.2" height="1.2"/><rect x="1291.9" y="319.5" width="1.2" height="1.2"/><rect x="1286.4" y="313.9" width="1.2" height="1.2"/><rect x="1291.1" y="321.3" width="1.2" height="1.2"/><rect x="1297.5" y="312.4" width="1.2" height="1.2"/><rect x="1301.6" y="314.5" width="1.2" height="1.2"/><rect x="1292.0" y="321.5" width="1.2" height="1.2"/><rect x="1300.8" y="322.4" width="1.2" height="1.2"/><rect x="1304.2" y="317.9" width="1.2" height="1.2"/><rect x="1296.5" y="309.0" width="1.2" height="1.2"/><rect x="1300.8" y="314.5" width="1.2" height="1.2"/><rect x="1300.6" y="314.1" width="1.2" height="1.2"/><rect x="1290.4" y="309.4" width="1.2" height="1.2"/><rect x="1300.8" y="320.3" width="1.2" height="1.2"/><rect x="1293.4" y="316.4" width="1.2" height="1.2"/><rect x="1305.9" y="310.2" width="1.2" height="1.2"/><rect x="1293.0" y="308.9" width="1.2" height="1.2"/><rect x="1304.4" y="315.4" width="1.2" height="1.2"/><rect x="1292.1" y="306.3" width="1.2" height="1.2"/><rect x="1294.2" y="319.0" width="1.2" height="1.2"/><rect x="1293.4" y="312.2" width="1.2" height="1.2"/><rect x="1300.4" y="308.3" width="1.2" height="1.2"/><rect x="1296.0" y="317.1" width="1.2" height="1.2"/><rect x="1289.8" y="310.3" width="1.2" height="1.2"/><rect x="1297.4" y="313.7" width="1.2" height="1.2"/><rect x="1293.8" y="315.2" width="1.2" height="1.2"/><rect x="1297.3" y="309.8" width="1.2" height="1.2"/><rect x="1290.6" y="316.4" width="1.2" height="1.2"/><rect x="1304.0" y="320.7" width="1.2" height="1.2"/><rect x="1289.3" y="319.4" width="1.2" height="1.2"/><rect x="1301.3" y="314.1" width="1.2" height="1.2"/><rect x="1299.3" y="318.2" width="1.2" height="1.2"/><rect x="1308.9" y="309.2" width="1.2" height="1.2"/><rect x="1300.1" y="313.6" width="1.2" height="1.2"/><rect x="1294.1" y="319.7" width="1.2" height="1.2"/><rect x="1301.7" y="309.4" width="1.2" height="1.2"/><rect x="1293.5" y="315.3" width="1.2" height="1.2"/><rect x="1285.1" y="318.4" width="1.2" height="1.2"/><rect x="1295.1" y="315.0" width="1.2" height="1.2"/><rect x="1298.2" y="322.8" width="1.2" height="1.2"/><rect x="1295.9" y="312.5" width="1.2" height="1.2"/><rect x="1308.6" y="311.9" width="1.2" height="1.2"/><rect x="1291.8" y="307.7" width="1.2" height="1.2"/><rect x="1303.7" y="315.5" width="1.2" height="1.2"/><rect x="1299.2" y="315.0" width="1.2" height="1.2"/><rect x="1294.7" y="310.5" width="1.2" height="1.2"/><rect x="1289.9" y="316.3" width="1.2" height="1.2"/><rect x="1296.6" y="322.0" width="1.2" height="1.2"/><rect x="1290.0" y="311.9" width="1.2" height="1.2"/><rect x="1288.1" y="320.8" width="1.2" height="1.2"/><rect x="1286.5" y="317.9" width="1.2" height="1.2"/><rect x="1306.4" y="313.6" width="1.2" height="1.2"/><rect x="1301.1" y="304.2" width="1.2" height="1.2"/><rect x="1292.8" y="306.4" width="1.2" height="1.2"/><rect x="1297.0" y="314.3" width="1.2" height="1.2"/><rect x="1290.0" y="318.8" width="1.2" height="1.2"/><rect x="1298.3" y="311.8" width="1.2" height="1.2"/><rect x="1291.9" y="307.3" width="1.2" height="1.2"/><rect x="1294.3" y="324.3" width="1.2" height="1.2"/><rect x="1290.4" y="316.3" width="1.2" height="1.2"/><rect x="1291.6" y="318.1" width="1.2" height="1.2"/><rect x="1299.0" y="313.2" width="1.2" height="1.2"/><rect x="1282.5" y="311.8" width="1.2" height="1.2"/><rect x="1304.6" y="313.1" width="1.2" height="1.2"/><rect x="1300.4" y="312.0" width="1.2" height="1.2"/><rect x="1281.9" y="316.3" width="1.2" height="1.2"/><rect x="1298.1" y="311.5" width="1.2" height="1.2"/><rect x="1293.0" y="315.7" width="1.2" height="1.2"/><rect x="1291.3" y="315.9" width="1.2" height="1.2"/><rect x="1294.2" y="303.1" width="1.2" height="1.2"/><rect x="1294.6" y="311.5" width="1.2" height="1.2"/><rect x="1289.5" y="316.2" width="1.2" height="1.2"/><rect x="1292.1" y="316.8" width="1.2" height="1.2"/><rect x="1303.8" y="315.0" width="1.2" height="1.2"/><rect x="1284.3" y="310.8" width="1.2" height="1.2"/><rect x="1302.5" y="313.1" width="1.2" height="1.2"/><rect x="1289.7" y="313.9" width="1.2" height="1.2"/><rect x="1299.5" y="315.5" width="1.2" height="1.2"/><rect x="1300.5" y="310.4" width="1.2" height="1.2"/><rect x="1293.7" y="313.1" width="1.2" height="1.2"/><rect x="1295.6" y="304.4" width="1.2" height="1.2"/><rect x="1294.0" y="307.9" width="1.2" height="1.2"/><rect x="1306.1" y="321.7" width="1.2" height="1.2"/><rect x="1308.2" y="318.1" width="1.2" height="1.2"/><rect x="1292.2" y="318.9" width="1.2" height="1.2"/><rect x="1294.3" y="317.2" width="1.2" height="1.2"/><rect x="1289.1" y="311.5" width="1.2" height="1.2"/><rect x="1299.2" y="322.7" width="1.2" height="1.2"/><rect x="1295.6" y="325.0" width="1.2" height="1.2"/><rect x="1316.2" y="308.2" width="1.2" height="1.2"/><rect x="1295.6" y="309.8" width="1.2" height="1.2"/><rect x="1294.7" y="311.8" width="1.2" height="1.2"/><rect x="1295.3" y="318.9" width="1.2" height="1.2"/><rect x="1302.7" y="315.6" width="1.2" height="1.2"/><rect x="1295.8" y="314.9" width="1.2" height="1.2"/><rect x="1296.7" y="317.0" width="1.2" height="1.2"/><rect x="1295.8" y="316.7" width="1.2" height="1.2"/><rect x="1286.1" y="318.1" width="1.2" height="1.2"/><rect x="1308.7" y="315.2" width="1.2" height="1.2"/><rect x="1285.3" y="320.7" width="1.2" height="1.2"/><rect x="1293.3" y="300.1" width="1.2" height="1.2"/><rect x="1294.2" y="317.2" width="1.2" height="1.2"/><rect x="1298.6" y="320.2" width="1.2" height="1.2"/><rect x="1300.4" y="314.9" width="1.2" height="1.2"/><rect x="1281.1" y="309.0" width="1.2" height="1.2"/><rect x="1297.1" y="317.6" width="1.2" height="1.2"/><rect x="1288.2" y="311.4" width="1.2" height="1.2"/><rect x="1299.3" y="305.3" width="1.2" height="1.2"/><rect x="1281.4" y="313.2" width="1.2" height="1.2"/><rect x="1297.7" y="312.1" width="1.2" height="1.2"/><rect x="1278.8" y="314.4" width="1.2" height="1.2"/><rect x="1285.9" y="317.4" width="1.2" height="1.2"/><rect x="1295.1" y="315.6" width="1.2" height="1.2"/><rect x="1300.6" y="311.8" width="1.2" height="1.2"/><rect x="1301.9" y="320.2" width="1.2" height="1.2"/><rect x="1298.8" y="320.7" width="1.2" height="1.2"/><rect x="1291.2" y="318.7" width="1.2" height="1.2"/><rect x="1297.8" y="309.7" width="1.2" height="1.2"/><rect x="1295.2" y="311.8" width="1.2" height="1.2"/><rect x="1291.7" y="314.8" width="1.2" height="1.2"/><rect x="1303.7" y="312.8" width="1.2" height="1.2"/><rect x="1296.7" y="307.4" width="1.2" height="1.2"/><rect x="1296.6" y="319.8" width="1.2" height="1.2"/><rect x="1301.8" y="316.6" width="1.2" height="1.2"/><rect x="1291.9" y="309.7" width="1.2" height="1.2"/><rect x="1295.1" y="308.0" width="1.2" height="1.2"/><rect x="1286.7" y="318.8" width="1.2" height="1.2"/><rect x="1289.0" y="322.9" width="1.2" height="1.2"/><rect x="1285.2" y="316.4" width="1.2" height="1.2"/><rect x="1287.1" y="315.2" width="1.2" height="1.2"/><rect x="1288.1" y="314.5" width="1.2" height="1.2"/><rect x="1294.7" y="312.2" width="1.2" height="1.2"/><rect x="1299.6" y="321.5" width="1.2" height="1.2"/><rect x="1291.4" y="318.5" width="1.2" height="1.2"/><rect x="1296.4" y="314.2" width="1.2" height="1.2"/><rect x="1312.1" y="304.0" width="1.2" height="1.2"/><rect x="1290.8" y="305.7" width="1.2" height="1.2"/><rect x="1293.5" y="313.3" width="1.2" height="1.2"/><rect x="1324.1" y="316.0" width="1.2" height="1.2"/><rect x="1309.2" y="320.5" width="1.2" height="1.2"/><rect x="1292.5" y="316.6" width="1.2" height="1.2"/><rect x="1308.2" y="315.2" width="1.2" height="1.2"/><rect x="1297.4" y="316.7" width="1.2" height="1.2"/><rect x="1284.6" y="310.5" width="1.2" height="1.2"/><rect x="1298.3" y="316.9" width="1.2" height="1.2"/><rect x="1289.0" y="312.8" width="1.2" height="1.2"/><rect x="1294.9" y="313.6" width="1.2" height="1.2"/><rect x="1301.0" y="314.8" width="1.2" height="1.2"/><rect x="1297.0" y="307.6" width="1.2" height="1.2"/><rect x="1288.0" y="315.9" width="1.2" height="1.2"/><rect x="1283.9" y="315.6" width="1.2" height="1.2"/><rect x="1290.9" y="310.5" width="1.2" height="1.2"/><rect x="1300.6" y="311.1" width="1.2" height="1.2"/><rect x="1289.4" y="311.1" width="1.2" height="1.2"/><rect x="1296.2" y="327.4" width="1.2" height="1.2"/><rect x="1280.0" y="314.2" width="1.2" height="1.2"/><rect x="1294.0" y="318.8" width="1.2" height="1.2"/><rect x="1293.0" y="302.5" width="1.2" height="1.2"/><rect x="1305.6" y="309.1" width="1.2" height="1.2"/><rect x="1295.3" y="307.8" width="1.2" height="1.2"/><rect x="1287.6" y="311.9" width="1.2" height="1.2"/><rect x="1302.1" y="318.3" width="1.2" height="1.2"/><rect x="1291.3" y="316.7" width="1.2" height="1.2"/><rect x="1293.0" y="314.8" width="1.2" height="1.2"/><rect x="1296.9" y="317.2" width="1.2" height="1.2"/><rect x="1291.1" y="313.7" width="1.2" height="1.2"/><rect x="1297.3" y="314.7" width="1.2" height="1.2"/><rect x="1289.8" y="322.5" width="1.2" height="1.2"/><rect x="1292.3" y="317.9" width="1.2" height="1.2"/><rect x="1297.2" y="320.1" width="1.2" height="1.2"/><rect x="1279.4" y="324.0" width="1.2" height="1.2"/><rect x="1294.1" y="308.4" width="1.2" height="1.2"/><rect x="1296.7" y="325.0" width="1.2" height="1.2"/><rect x="1299.5" y="308.4" width="1.2" height="1.2"/><rect x="1292.2" y="320.6" width="1.2" height="1.2"/><rect x="1285.2" y="313.4" width="1.2" height="1.2"/><rect x="1293.5" y="324.6" width="1.2" height="1.2"/><rect x="1293.5" y="320.5" width="1.2" height="1.2"/><rect x="1290.6" y="310.4" width="1.2" height="1.2"/><rect x="1303.2" y="317.2" width="1.2" height="1.2"/><rect x="1282.8" y="317.3" width="1.2" height="1.2"/><rect x="1300.5" y="311.3" width="1.2" height="1.2"/><rect x="1297.3" y="315.5" width="1.2" height="1.2"/><rect x="1292.0" y="311.5" width="1.2" height="1.2"/><rect x="1290.7" y="313.0" width="1.2" height="1.2"/><rect x="1285.8" y="314.0" width="1.2" height="1.2"/><rect x="1284.5" y="314.6" width="1.2" height="1.2"/><rect x="1295.0" y="309.3" width="1.2" height="1.2"/><rect x="1302.0" y="323.5" width="1.2" height="1.2"/><rect x="1305.5" y="307.7" width="1.2" height="1.2"/><rect x="1305.1" y="315.3" width="1.2" height="1.2"/><rect x="1295.3" y="311.4" width="1.2" height="1.2"/><rect x="1295.6" y="320.9" width="1.2" height="1.2"/><rect x="1299.7" y="312.3" width="1.2" height="1.2"/><rect x="1290.7" y="312.3" width="1.2" height="1.2"/><rect x="1300.0" y="323.1" width="1.2" height="1.2"/><rect x="1287.8" y="314.2" width="1.2" height="1.2"/><rect x="1292.8" y="310.7" width="1.2" height="1.2"/><rect x="1298.6" y="316.9" width="1.2" height="1.2"/><rect x="1285.1" y="309.3" width="1.2" height="1.2"/><rect x="1304.5" y="315.7" width="1.2" height="1.2"/><rect x="1299.5" y="311.8" width="1.2" height="1.2"/><rect x="1292.8" y="316.4" width="1.2" height="1.2"/><rect x="1291.9" y="309.0" width="1.2" height="1.2"/><rect x="1295.6" y="318.5" width="1.2" height="1.2"/><rect x="1288.0" y="319.3" width="1.2" height="1.2"/><rect x="1300.9" y="310.1" width="1.2" height="1.2"/><rect x="1295.7" y="314.0" width="1.2" height="1.2"/><rect x="1300.4" y="317.4" width="1.2" height="1.2"/><rect x="1286.0" y="307.8" width="1.2" height="1.2"/><rect x="1303.3" y="314.8" width="1.2" height="1.2"/><rect x="1298.7" y="315.8" width="1.2" height="1.2"/><rect x="1307.0" y="308.5" width="1.2" height="1.2"/><rect x="1303.7" y="310.3" width="1.2" height="1.2"/><rect x="1301.0" y="320.6" width="1.2" height="1.2"/><rect x="1285.4" y="316.2" width="1.2" height="1.2"/><rect x="1293.6" y="312.9" width="1.2" height="1.2"/><rect x="1296.0" y="309.2" width="1.2" height="1.2"/><rect x="1288.5" y="317.4" width="1.2" height="1.2"/><rect x="1301.9" y="311.5" width="1.2" height="1.2"/><rect x="1284.8" y="325.2" width="1.2" height="1.2"/><rect x="1303.8" y="315.9" width="1.2" height="1.2"/><rect x="1288.0" y="311.5" width="1.2" height="1.2"/><rect x="1297.4" y="309.7" width="1.2" height="1.2"/><rect x="1307.5" y="314.9" width="1.2" height="1.2"/><rect x="1298.6" y="309.4" width="1.2" height="1.2"/><rect x="1288.9" y="310.5" width="1.2" height="1.2"/><rect x="1297.7" y="313.0" width="1.2" height="1.2"/><rect x="1293.5" y="315.7" width="1.2" height="1.2"/><rect x="1297.3" y="321.3" width="1.2" height="1.2"/><rect x="1294.2" y="309.4" width="1.2" height="1.2"/><rect x="1295.6" y="321.2" width="1.2" height="1.2"/><rect x="1291.6" y="314.5" width="1.2" height="1.2"/><rect x="1293.0" y="316.2" width="1.2" height="1.2"/><rect x="1297.5" y="310.4" width="1.2" height="1.2"/><rect x="1294.0" y="318.7" width="1.2" height="1.2"/><rect x="1303.7" y="318.6" width="1.2" height="1.2"/><rect x="1302.0" y="312.7" width="1.2" height="1.2"/><rect x="1293.0" y="318.6" width="1.2" height="1.2"/><rect x="1287.0" y="314.0" width="1.2" height="1.2"/><rect x="1282.0" y="312.4" width="1.2" height="1.2"/><rect x="1290.4" y="308.6" width="1.2" height="1.2"/><rect x="1299.9" y="310.8" width="1.2" height="1.2"/><rect x="1292.9" y="313.0" width="1.2" height="1.2"/><rect x="1290.2" y="321.0" width="1.2" height="1.2"/><rect x="1292.0" y="315.2" width="1.2" height="1.2"/><rect x="1286.0" y="312.0" width="1.2" height="1.2"/><rect x="1293.3" y="312.8" width="1.2" height="1.2"/><rect x="1291.4" y="314.9" width="1.2" height="1.2"/><rect x="1307.1" y="313.6" width="1.2" height="1.2"/><rect x="1294.6" y="312.4" width="1.2" height="1.2"/><rect x="1314.3" y="321.9" width="1.2" height="1.2"/><rect x="1299.8" y="317.6" width="1.2" height="1.2"/><rect x="1290.4" y="313.5" width="1.2" height="1.2"/><rect x="1297.2" y="314.8" width="1.2" height="1.2"/><rect x="1289.4" y="310.6" width="1.2" height="1.2"/><rect x="1299.5" y="315.7" width="1.2" height="1.2"/><rect x="1280.2" y="314.7" width="1.2" height="1.2"/><rect x="1305.0" y="311.2" width="1.2" height="1.2"/><rect x="1297.4" y="307.4" width="1.2" height="1.2"/><rect x="1301.8" y="309.0" width="1.2" height="1.2"/><rect x="1286.5" y="312.8" width="1.2" height="1.2"/><rect x="1313.1" y="311.4" width="1.2" height="1.2"/><rect x="1286.4" y="316.4" width="1.2" height="1.2"/><rect x="1297.4" y="322.1" width="1.2" height="1.2"/><rect x="1286.3" y="306.7" width="1.2" height="1.2"/><rect x="1293.4" y="316.0" width="1.2" height="1.2"/><rect x="1298.3" y="319.4" width="1.2" height="1.2"/><rect x="1284.7" y="310.4" width="1.2" height="1.2"/><rect x="1294.7" y="318.2" width="1.2" height="1.2"/><rect x="1299.2" y="312.3" width="1.2" height="1.2"/><rect x="1288.2" y="318.4" width="1.2" height="1.2"/><rect x="1302.7" y="327.0" width="1.2" height="1.2"/><rect x="1294.4" y="321.9" width="1.2" height="1.2"/><rect x="1286.8" y="311.7" width="1.2" height="1.2"/><rect x="1290.7" y="312.1" width="1.2" height="1.2"/><rect x="1289.2" y="311.7" width="1.2" height="1.2"/><rect x="1295.3" y="312.1" width="1.2" height="1.2"/><rect x="1300.5" y="313.9" width="1.2" height="1.2"/><rect x="1295.7" y="321.2" width="1.2" height="1.2"/><rect x="1298.0" y="315.0" width="1.2" height="1.2"/><rect x="1295.5" y="314.6" width="1.2" height="1.2"/><rect x="1299.9" y="310.5" width="1.2" height="1.2"/><rect x="1304.1" y="321.6" width="1.2" height="1.2"/><rect x="1304.2" y="311.9" width="1.2" height="1.2"/><rect x="1284.0" y="312.2" width="1.2" height="1.2"/><rect x="1296.8" y="318.2" width="1.2" height="1.2"/><rect x="1294.3" y="312.8" width="1.2" height="1.2"/><rect x="1306.9" y="311.1" width="1.2" height="1.2"/><rect x="1303.5" y="318.5" width="1.2" height="1.2"/><rect x="1285.9" y="315.6" width="1.2" height="1.2"/><rect x="1291.6" y="309.8" width="1.2" height="1.2"/><rect x="1282.1" y="306.9" width="1.2" height="1.2"/><rect x="1298.7" y="312.4" width="1.2" height="1.2"/><rect x="1297.7" y="309.3" width="1.2" height="1.2"/><rect x="1293.3" y="313.0" width="1.2" height="1.2"/><rect x="1284.3" y="306.4" width="1.2" height="1.2"/><rect x="1298.9" y="315.0" width="1.2" height="1.2"/><rect x="1288.8" y="313.8" width="1.2" height="1.2"/><rect x="1300.5" y="322.9" width="1.2" height="1.2"/><rect x="1289.2" y="317.2" width="1.2" height="1.2"/><rect x="1311.2" y="314.6" width="1.2" height="1.2"/><rect x="1306.5" y="302.1" width="1.2" height="1.2"/><rect x="1306.3" y="314.2" width="1.2" height="1.2"/><rect x="1281.9" y="317.9" width="1.2" height="1.2"/><rect x="1303.4" y="319.9" width="1.2" height="1.2"/><rect x="1304.5" y="314.1" width="1.2" height="1.2"/><rect x="1290.2" y="312.1" width="1.2" height="1.2"/><rect x="1295.4" y="316.2" width="1.2" height="1.2"/><rect x="1292.1" y="314.5" width="1.2" height="1.2"/><rect x="1302.1" y="315.8" width="1.2" height="1.2"/><rect x="1312.6" y="324.4" width="1.2" height="1.2"/><rect x="1287.2" y="311.6" width="1.2" height="1.2"/><rect x="1286.1" y="308.8" width="1.2" height="1.2"/><rect x="1299.7" y="309.6" width="1.2" height="1.2"/><rect x="1288.0" y="313.0" width="1.2" height="1.2"/><rect x="1301.6" y="312.6" width="1.2" height="1.2"/><rect x="1293.1" y="318.6" width="1.2" height="1.2"/><rect x="1299.2" y="316.4" width="1.2" height="1.2"/><rect x="1302.7" y="309.5" width="1.2" height="1.2"/><rect x="1297.3" y="311.3" width="1.2" height="1.2"/><rect x="1303.2" y="318.1" width="1.2" height="1.2"/><rect x="1288.0" y="320.6" width="1.2" height="1.2"/><rect x="1287.1" y="319.8" width="1.2" height="1.2"/><rect x="1297.2" y="310.1" width="1.2" height="1.2"/><rect x="1287.4" y="312.8" width="1.2" height="1.2"/><rect x="1295.5" y="310.9" width="1.2" height="1.2"/><rect x="1299.8" y="307.6" width="1.2" height="1.2"/><rect x="1295.6" y="314.3" width="1.2" height="1.2"/><rect x="1281.9" y="315.7" width="1.2" height="1.2"/><rect x="1286.4" y="302.5" width="1.2" height="1.2"/><rect x="1291.1" y="313.2" width="1.2" height="1.2"/><rect x="1302.4" y="312.0" width="1.2" height="1.2"/><rect x="1306.6" y="321.1" width="1.2" height="1.2"/><rect x="1303.7" y="320.5" width="1.2" height="1.2"/><rect x="1298.3" y="311.6" width="1.2" height="1.2"/><rect x="1300.5" y="318.8" width="1.2" height="1.2"/><rect x="1297.4" y="313.1" width="1.2" height="1.2"/><rect x="1284.1" y="317.5" width="1.2" height="1.2"/><rect x="1298.3" y="308.1" width="1.2" height="1.2"/><rect x="1296.4" y="317.7" width="1.2" height="1.2"/><rect x="1294.9" y="318.0" width="1.2" height="1.2"/><rect x="1301.3" y="307.3" width="1.2" height="1.2"/><rect x="1293.4" y="316.5" width="1.2" height="1.2"/><rect x="1302.5" y="320.9" width="1.2" height="1.2"/><rect x="1281.5" y="313.9" width="1.2" height="1.2"/><rect x="1301.0" y="320.1" width="1.2" height="1.2"/><rect x="1308.2" y="309.8" width="1.2" height="1.2"/><rect x="1292.9" y="309.3" width="1.2" height="1.2"/><rect x="1301.7" y="308.0" width="1.2" height="1.2"/><rect x="1304.4" y="318.7" width="1.2" height="1.2"/><rect x="1299.3" y="304.0" width="1.2" height="1.2"/><rect x="1290.7" y="317.8" width="1.2" height="1.2"/><rect x="1285.2" y="313.1" width="1.2" height="1.2"/><rect x="1294.9" y="318.5" width="1.2" height="1.2"/><rect x="1297.8" y="315.6" width="1.2" height="1.2"/><rect x="1292.4" y="314.3" width="1.2" height="1.2"/><rect x="1294.7" y="317.7" width="1.2" height="1.2"/><rect x="1294.3" y="319.2" width="1.2" height="1.2"/><rect x="1283.1" y="319.9" width="1.2" height="1.2"/><rect x="1294.4" y="319.6" width="1.2" height="1.2"/><rect x="1296.3" y="318.3" width="1.2" height="1.2"/><rect x="1306.7" y="311.6" width="1.2" height="1.2"/><rect x="1296.3" y="313.4" width="1.2" height="1.2"/><rect x="1297.2" y="306.6" width="1.2" height="1.2"/><rect x="1294.4" y="313.1" width="1.2" height="1.2"/><rect x="1289.8" y="313.3" width="1.2" height="1.2"/><rect x="1284.2" y="320.9" width="1.2" height="1.2"/><rect x="1299.0" y="323.2" width="1.2" height="1.2"/><rect x="1289.2" y="308.7" width="1.2" height="1.2"/><rect x="1297.7" y="306.3" width="1.2" height="1.2"/><rect x="1297.3" y="310.9" width="1.2" height="1.2"/><rect x="1293.2" y="315.4" width="1.2" height="1.2"/><rect x="1296.0" y="323.1" width="1.2" height="1.2"/><rect x="1300.3" y="308.1" width="1.2" height="1.2"/><rect x="1302.9" y="307.9" width="1.2" height="1.2"/><rect x="1296.3" y="308.3" width="1.2" height="1.2"/><rect x="1289.5" y="320.5" width="1.2" height="1.2"/><rect x="1291.5" y="311.2" width="1.2" height="1.2"/><rect x="1291.5" y="312.7" width="1.2" height="1.2"/><rect x="1306.3" y="308.6" width="1.2" height="1.2"/><rect x="1286.5" y="317.0" width="1.2" height="1.2"/><rect x="1283.8" y="312.5" width="1.2" height="1.2"/><rect x="1304.0" y="314.2" width="1.2" height="1.2"/><rect x="1292.1" y="310.8" width="1.2" height="1.2"/><rect x="1288.8" y="311.4" width="1.2" height="1.2"/><rect x="1296.6" y="320.1" width="1.2" height="1.2"/><rect x="1302.7" y="311.5" width="1.2" height="1.2"/><rect x="1290.2" y="317.5" width="1.2" height="1.2"/><rect x="1282.1" y="312.1" width="1.2" height="1.2"/><rect x="1293.2" y="308.9" width="1.2" height="1.2"/><rect x="1288.2" y="315.8" width="1.2" height="1.2"/><rect x="1283.3" y="309.8" width="1.2" height="1.2"/><rect x="1290.7" y="314.5" width="1.2" height="1.2"/><rect x="1285.4" y="319.3" width="1.2" height="1.2"/><rect x="1293.2" y="312.9" width="1.2" height="1.2"/><rect x="1292.8" y="310.9" width="1.2" height="1.2"/><rect x="1288.2" y="319.6" width="1.2" height="1.2"/><rect x="1297.0" y="313.6" width="1.2" height="1.2"/><rect x="1302.8" y="310.7" width="1.2" height="1.2"/><rect x="1300.1" y="314.2" width="1.2" height="1.2"/><rect x="1288.8" y="317.7" width="1.2" height="1.2"/><rect x="1284.4" y="317.2" width="1.2" height="1.2"/><rect x="1288.9" y="316.0" width="1.2" height="1.2"/><rect x="1305.6" y="316.8" width="1.2" height="1.2"/><rect x="1290.9" y="313.9" width="1.2" height="1.2"/><rect x="1292.7" y="308.5" width="1.2" height="1.2"/><rect x="1287.2" y="314.3" width="1.2" height="1.2"/><rect x="1299.3" y="305.7" width="1.2" height="1.2"/><rect x="1294.8" y="316.4" width="1.2" height="1.2"/><rect x="1296.1" y="309.3" width="1.2" height="1.2"/><rect x="1302.9" y="308.3" width="1.2" height="1.2"/><rect x="1300.1" y="321.6" width="1.2" height="1.2"/><rect x="1280.2" y="315.2" width="1.2" height="1.2"/><rect x="1297.6" y="315.1" width="1.2" height="1.2"/><rect x="1289.6" y="312.5" width="1.2" height="1.2"/><rect x="1284.9" y="314.6" width="1.2" height="1.2"/><rect x="1299.2" y="310.8" width="1.2" height="1.2"/><rect x="1288.4" y="311.7" width="1.2" height="1.2"/><rect x="1295.2" y="314.3" width="1.2" height="1.2"/><rect x="1294.5" y="314.3" width="1.2" height="1.2"/><rect x="1285.6" y="301.1" width="1.2" height="1.2"/><rect x="1299.7" y="320.7" width="1.2" height="1.2"/><rect x="1284.8" y="310.8" width="1.2" height="1.2"/><rect x="1297.4" y="318.4" width="1.2" height="1.2"/><rect x="1300.0" y="320.0" width="1.2" height="1.2"/><rect x="1294.8" y="315.9" width="1.2" height="1.2"/><rect x="1298.2" y="311.9" width="1.2" height="1.2"/><rect x="1304.0" y="316.9" width="1.2" height="1.2"/><rect x="1302.4" y="312.1" width="1.2" height="1.2"/><rect x="1302.8" y="309.0" width="1.2" height="1.2"/><rect x="1298.1" y="301.6" width="1.2" height="1.2"/><rect x="1287.7" y="317.4" width="1.2" height="1.2"/><rect x="1291.9" y="314.7" width="1.2" height="1.2"/><rect x="1283.2" y="321.2" width="1.2" height="1.2"/><rect x="1299.5" y="313.8" width="1.2" height="1.2"/><rect x="1298.2" y="315.5" width="1.2" height="1.2"/><rect x="1305.5" y="314.9" width="1.2" height="1.2"/><rect x="1284.3" y="312.7" width="1.2" height="1.2"/><rect x="1304.6" y="316.6" width="1.2" height="1.2"/><rect x="1292.1" y="316.8" width="1.2" height="1.2"/><rect x="1296.0" y="316.8" width="1.2" height="1.2"/><rect x="1283.5" y="309.7" width="1.2" height="1.2"/><rect x="1300.0" y="312.9" width="1.2" height="1.2"/><rect x="1297.7" y="323.1" width="1.2" height="1.2"/><rect x="1292.9" y="315.1" width="1.2" height="1.2"/><rect x="1291.1" y="311.0" width="1.2" height="1.2"/><rect x="1294.6" y="307.1" width="1.2" height="1.2"/><rect x="1279.7" y="320.3" width="1.2" height="1.2"/><rect x="1294.4" y="319.2" width="1.2" height="1.2"/><rect x="1296.0" y="314.6" width="1.2" height="1.2"/><rect x="1300.1" y="317.3" width="1.2" height="1.2"/><rect x="1286.3" y="319.6" width="1.2" height="1.2"/><rect x="1288.0" y="314.9" width="1.2" height="1.2"/><rect x="1313.9" y="314.3" width="1.2" height="1.2"/><rect x="1307.4" y="312.3" width="1.2" height="1.2"/><rect x="1299.7" y="314.2" width="1.2" height="1.2"/><rect x="1298.2" y="309.9" width="1.2" height="1.2"/><rect x="1288.4" y="315.5" width="1.2" height="1.2"/><rect x="1283.7" y="310.0" width="1.2" height="1.2"/><rect x="1299.9" y="311.0" width="1.2" height="1.2"/><rect x="1288.7" y="308.7" width="1.2" height="1.2"/><rect x="1296.2" y="312.2" width="1.2" height="1.2"/><rect x="1296.3" y="313.0" width="1.2" height="1.2"/><rect x="1308.7" y="311.9" width="1.2" height="1.2"/><rect x="1280.8" y="314.5" width="1.2" height="1.2"/><rect x="1295.2" y="314.7" width="1.2" height="1.2"/><rect x="1283.4" y="319.2" width="1.2" height="1.2"/><rect x="1294.9" y="313.7" width="1.2" height="1.2"/><rect x="1283.6" y="316.1" width="1.2" height="1.2"/><rect x="1294.7" y="320.3" width="1.2" height="1.2"/><rect x="1292.1" y="308.1" width="1.2" height="1.2"/><rect x="1296.1" y="309.7" width="1.2" height="1.2"/><rect x="1298.2" y="308.9" width="1.2" height="1.2"/><rect x="1294.2" y="312.9" width="1.2" height="1.2"/><rect x="1294.9" y="311.5" width="1.2" height="1.2"/><rect x="1289.2" y="313.7" width="1.2" height="1.2"/><rect x="1290.9" y="314.6" width="1.2" height="1.2"/><rect x="1293.2" y="303.4" width="1.2" height="1.2"/><rect x="1294.7" y="320.4" width="1.2" height="1.2"/><rect x="1297.4" y="316.7" width="1.2" height="1.2"/><rect x="1298.5" y="311.7" width="1.2" height="1.2"/><rect x="1285.5" y="317.7" width="1.2" height="1.2"/><rect x="1302.8" y="316.6" width="1.2" height="1.2"/><rect x="1298.3" y="315.8" width="1.2" height="1.2"/><rect x="1295.0" y="315.2" width="1.2" height="1.2"/><rect x="1295.3" y="315.4" width="1.2" height="1.2"/><rect x="1288.3" y="311.0" width="1.2" height="1.2"/><rect x="1299.3" y="312.4" width="1.2" height="1.2"/><rect x="1277.6" y="314.5" width="1.2" height="1.2"/><rect x="1278.6" y="322.8" width="1.2" height="1.2"/><rect x="1300.4" y="317.1" width="1.2" height="1.2"/><rect x="1290.4" y="308.7" width="1.2" height="1.2"/><rect x="1293.6" y="314.0" width="1.2" height="1.2"/><rect x="1289.6" y="314.7" width="1.2" height="1.2"/><rect x="1300.2" y="316.7" width="1.2" height="1.2"/><rect x="1287.7" y="304.0" width="1.2" height="1.2"/><rect x="1295.2" y="310.9" width="1.2" height="1.2"/><rect x="1298.4" y="321.5" width="1.2" height="1.2"/><rect x="1307.0" y="315.3" width="1.2" height="1.2"/><rect x="1303.2" y="321.5" width="1.2" height="1.2"/><rect x="1295.6" y="315.2" width="1.2" height="1.2"/><rect x="1301.4" y="313.8" width="1.2" height="1.2"/><rect x="1291.7" y="310.5" width="1.2" height="1.2"/><rect x="1295.3" y="311.1" width="1.2" height="1.2"/><rect x="1301.0" y="312.5" width="1.2" height="1.2"/><rect x="1305.8" y="319.6" width="1.2" height="1.2"/><rect x="1286.4" y="319.0" width="1.2" height="1.2"/><rect x="1292.4" y="320.3" width="1.2" height="1.2"/><rect x="1299.0" y="313.8" width="1.2" height="1.2"/><rect x="1300.1" y="311.5" width="1.2" height="1.2"/><rect x="1297.7" y="315.8" width="1.2" height="1.2"/><rect x="1294.3" y="315.8" width="1.2" height="1.2"/><rect x="1288.2" y="316.6" width="1.2" height="1.2"/><rect x="1286.7" y="316.9" width="1.2" height="1.2"/><rect x="1298.7" y="317.3" width="1.2" height="1.2"/><rect x="1291.4" y="327.9" width="1.2" height="1.2"/><rect x="1293.8" y="314.8" width="1.2" height="1.2"/><rect x="1290.0" y="320.6" width="1.2" height="1.2"/><rect x="1292.0" y="318.6" width="1.2" height="1.2"/><rect x="1288.7" y="315.5" width="1.2" height="1.2"/><rect x="1292.8" y="318.4" width="1.2" height="1.2"/><rect x="1293.4" y="310.2" width="1.2" height="1.2"/><rect x="1298.7" y="308.7" width="1.2" height="1.2"/><rect x="1288.7" y="317.6" width="1.2" height="1.2"/><rect x="1282.2" y="317.6" width="1.2" height="1.2"/><rect x="1292.6" y="310.0" width="1.2" height="1.2"/><rect x="1297.2" y="317.0" width="1.2" height="1.2"/><rect x="1291.4" y="313.4" width="1.2" height="1.2"/><rect x="1301.2" y="317.6" width="1.2" height="1.2"/><rect x="1295.2" y="310.7" width="1.2" height="1.2"/><rect x="1288.8" y="311.5" width="1.2" height="1.2"/><rect x="1300.4" y="316.8" width="1.2" height="1.2"/><rect x="1297.7" y="320.5" width="1.2" height="1.2"/><rect x="1293.5" y="312.5" width="1.2" height="1.2"/><rect x="1292.9" y="322.9" width="1.2" height="1.2"/><rect x="1281.0" y="315.5" width="1.2" height="1.2"/><rect x="1298.8" y="314.5" width="1.2" height="1.2"/><rect x="1312.2" y="319.6" width="1.2" height="1.2"/><rect x="1301.1" y="310.2" width="1.2" height="1.2"/><rect x="1299.2" y="312.6" width="1.2" height="1.2"/><rect x="1296.0" y="315.2" width="1.2" height="1.2"/><rect x="1292.3" y="317.1" width="1.2" height="1.2"/><rect x="1307.2" y="319.0" width="1.2" height="1.2"/><rect x="1297.2" y="305.5" width="1.2" height="1.2"/><rect x="1303.4" y="319.2" width="1.2" height="1.2"/><rect x="1294.4" y="312.1" width="1.2" height="1.2"/><rect x="1300.4" y="310.7" width="1.2" height="1.2"/><rect x="1301.4" y="309.4" width="1.2" height="1.2"/><rect x="1289.3" y="314.4" width="1.2" height="1.2"/><rect x="1285.5" y="314.3" width="1.2" height="1.2"/><rect x="1299.5" y="308.4" width="1.2" height="1.2"/><rect x="1302.3" y="311.8" width="1.2" height="1.2"/><rect x="1299.7" y="315.3" width="1.2" height="1.2"/><rect x="1292.6" y="312.0" width="1.2" height="1.2"/><rect x="1283.8" y="311.2" width="1.2" height="1.2"/><rect x="1290.4" y="321.8" width="1.2" height="1.2"/><rect x="1303.0" y="308.2" width="1.2" height="1.2"/><rect x="1301.5" y="315.4" width="1.2" height="1.2"/><rect x="1293.2" y="316.4" width="1.2" height="1.2"/><rect x="1301.4" y="311.8" width="1.2" height="1.2"/><rect x="1293.9" y="315.1" width="1.2" height="1.2"/><rect x="1288.9" y="315.2" width="1.2" height="1.2"/><rect x="1295.3" y="311.3" width="1.2" height="1.2"/><rect x="1289.9" y="315.7" width="1.2" height="1.2"/><rect x="1302.0" y="315.9" width="1.2" height="1.2"/><rect x="1289.9" y="317.7" width="1.2" height="1.2"/><rect x="1297.1" y="317.0" width="1.2" height="1.2"/><rect x="1304.0" y="310.3" width="1.2" height="1.2"/><rect x="1294.9" y="311.7" width="1.2" height="1.2"/><rect x="1289.7" y="323.4" width="1.2" height="1.2"/><rect x="1302.5" y="306.5" width="1.2" height="1.2"/><rect x="1298.9" y="311.9" width="1.2" height="1.2"/><rect x="1303.9" y="314.8" width="1.2" height="1.2"/><rect x="1294.7" y="315.0" width="1.2" height="1.2"/><rect x="1298.6" y="314.5" width="1.2" height="1.2"/><rect x="1294.3" y="313.8" width="1.2" height="1.2"/><rect x="1299.5" y="309.3" width="1.2" height="1.2"/><rect x="1295.9" y="313.9" width="1.2" height="1.2"/><rect x="1292.5" y="317.7" width="1.2" height="1.2"/><rect x="1286.8" y="312.8" width="1.2" height="1.2"/><rect x="1289.9" y="316.8" width="1.2" height="1.2"/><rect x="1292.6" y="314.6" width="1.2" height="1.2"/><rect x="1298.6" y="307.2" width="1.2" height="1.2"/><rect x="1299.1" y="311.0" width="1.2" height="1.2"/><rect x="1294.1" y="313.9" width="1.2" height="1.2"/><rect x="1301.6" y="317.7" width="1.2" height="1.2"/><rect x="1308.3" y="315.2" width="1.2" height="1.2"/><rect x="1292.6" y="312.1" width="1.2" height="1.2"/><rect x="1300.5" y="321.6" width="1.2" height="1.2"/><rect x="1298.3" y="311.8" width="1.2" height="1.2"/><rect x="1297.8" y="315.5" width="1.2" height="1.2"/><rect x="1296.1" y="311.1" width="1.2" height="1.2"/><rect x="1278.1" y="312.0" width="1.2" height="1.2"/><rect x="1303.3" y="315.4" width="1.2" height="1.2"/><rect x="1280.4" y="314.4" width="1.2" height="1.2"/><rect x="1283.0" y="323.3" width="1.2" height="1.2"/><rect x="1297.2" y="309.0" width="1.2" height="1.2"/><rect x="1301.5" y="310.9" width="1.2" height="1.2"/><rect x="1299.8" y="314.5" width="1.2" height="1.2"/><rect x="1287.6" y="317.4" width="1.2" height="1.2"/><rect x="1286.5" y="320.4" width="1.2" height="1.2"/><rect x="1296.3" y="309.8" width="1.2" height="1.2"/><rect x="1283.2" y="321.6" width="1.2" height="1.2"/><rect x="1306.1" y="308.8" width="1.2" height="1.2"/><rect x="1307.4" y="315.1" width="1.2" height="1.2"/><rect x="1294.4" y="314.0" width="1.2" height="1.2"/><rect x="1294.0" y="320.8" width="1.2" height="1.2"/><rect x="1297.0" y="306.1" width="1.2" height="1.2"/><rect x="1310.6" y="318.4" width="1.2" height="1.2"/><rect x="1288.3" y="312.8" width="1.2" height="1.2"/><rect x="1289.6" y="314.6" width="1.2" height="1.2"/><rect x="1298.7" y="315.5" width="1.2" height="1.2"/><rect x="1291.7" y="310.8" width="1.2" height="1.2"/><rect x="1301.8" y="313.9" width="1.2" height="1.2"/><rect x="1311.7" y="310.8" width="1.2" height="1.2"/><rect x="1301.4" y="314.6" width="1.2" height="1.2"/><rect x="1290.6" y="320.5" width="1.2" height="1.2"/><rect x="1296.8" y="310.4" width="1.2" height="1.2"/><rect x="1293.7" y="319.0" width="1.2" height="1.2"/><rect x="1287.3" y="320.6" width="1.2" height="1.2"/><rect x="1300.7" y="313.2" width="1.2" height="1.2"/><rect x="1305.4" y="322.2" width="1.2" height="1.2"/><rect x="1300.1" y="315.2" width="1.2" height="1.2"/><rect x="1308.8" y="321.1" width="1.2" height="1.2"/><rect x="1289.4" y="313.5" width="1.2" height="1.2"/><rect x="1294.4" y="312.6" width="1.2" height="1.2"/><rect x="1285.4" y="318.5" width="1.2" height="1.2"/><rect x="1296.5" y="314.8" width="1.2" height="1.2"/><rect x="1305.8" y="311.9" width="1.2" height="1.2"/><rect x="1295.5" y="315.6" width="1.2" height="1.2"/><rect x="1292.9" y="313.9" width="1.2" height="1.2"/><rect x="1301.3" y="314.4" width="1.2" height="1.2"/><rect x="1305.3" y="311.0" width="1.2" height="1.2"/><rect x="1297.3" y="308.0" width="1.2" height="1.2"/><rect x="1295.1" y="311.2" width="1.2" height="1.2"/><rect x="1305.5" y="317.8" width="1.2" height="1.2"/><rect x="1299.5" y="322.7" width="1.2" height="1.2"/><rect x="1306.1" y="317.6" width="1.2" height="1.2"/><rect x="1291.0" y="307.9" width="1.2" height="1.2"/><rect x="1295.7" y="312.8" width="1.2" height="1.2"/><rect x="1291.3" y="313.1" width="1.2" height="1.2"/><rect x="1284.2" y="321.1" width="1.2" height="1.2"/><rect x="1287.8" y="311.4" width="1.2" height="1.2"/><rect x="1299.9" y="307.0" width="1.2" height="1.2"/><rect x="1302.4" y="318.6" width="1.2" height="1.2"/><rect x="1293.7" y="309.5" width="1.2" height="1.2"/><rect x="1292.5" y="306.0" width="1.2" height="1.2"/><rect x="1305.7" y="314.6" width="1.2" height="1.2"/><rect x="1290.7" y="310.3" width="1.2" height="1.2"/><rect x="1300.0" y="321.2" width="1.2" height="1.2"/><rect x="1286.9" y="311.8" width="1.2" height="1.2"/><rect x="1283.4" y="317.5" width="1.2" height="1.2"/><rect x="1297.0" y="324.6" width="1.2" height="1.2"/><rect x="1295.0" y="312.4" width="1.2" height="1.2"/><rect x="1290.9" y="318.3" width="1.2" height="1.2"/><rect x="1284.3" y="317.8" width="1.2" height="1.2"/><rect x="1297.7" y="312.1" width="1.2" height="1.2"/><rect x="1289.5" y="319.2" width="1.2" height="1.2"/><rect x="1309.1" y="312.4" width="1.2" height="1.2"/><rect x="1299.7" y="322.3" width="1.2" height="1.2"/><rect x="1291.5" y="313.3" width="1.2" height="1.2"/><rect x="1287.2" y="313.7" width="1.2" height="1.2"/><rect x="1295.3" y="312.5" width="1.2" height="1.2"/><rect x="1290.6" y="307.2" width="1.2" height="1.2"/><rect x="1286.3" y="309.9" width="1.2" height="1.2"/><rect x="1300.5" y="312.1" width="1.2" height="1.2"/><rect x="1289.8" y="317.4" width="1.2" height="1.2"/><rect x="1299.9" y="311.0" width="1.2" height="1.2"/><rect x="1291.4" y="317.4" width="1.2" height="1.2"/><rect x="1298.5" y="310.6" width="1.2" height="1.2"/><rect x="1297.6" y="314.3" width="1.2" height="1.2"/><rect x="1303.8" y="310.4" width="1.2" height="1.2"/><rect x="1302.2" y="316.4" width="1.2" height="1.2"/><rect x="1288.7" y="319.2" width="1.2" height="1.2"/><rect x="1302.4" y="308.4" width="1.2" height="1.2"/><rect x="1310.1" y="309.2" width="1.2" height="1.2"/><rect x="1289.3" y="312.9" width="1.2" height="1.2"/><rect x="1301.4" y="317.1" width="1.2" height="1.2"/><rect x="1295.2" y="320.7" width="1.2" height="1.2"/><rect x="1298.8" y="320.8" width="1.2" height="1.2"/><rect x="1316.1" y="315.3" width="1.2" height="1.2"/><rect x="1277.4" y="312.3" width="1.2" height="1.2"/><rect x="1288.2" y="314.8" width="1.2" height="1.2"/><rect x="1296.6" y="308.8" width="1.2" height="1.2"/><rect x="1287.6" y="313.2" width="1.2" height="1.2"/><rect x="1294.5" y="302.4" width="1.2" height="1.2"/><rect x="1302.9" y="314.5" width="1.2" height="1.2"/><rect x="1295.8" y="315.8" width="1.2" height="1.2"/><rect x="1288.5" y="314.2" width="1.2" height="1.2"/><rect x="1303.4" y="319.4" width="1.2" height="1.2"/><rect x="1299.2" y="313.1" width="1.2" height="1.2"/><rect x="1289.9" y="320.5" width="1.2" height="1.2"/><rect x="1299.7" y="312.4" width="1.2" height="1.2"/><rect x="1280.1" y="310.4" width="1.2" height="1.2"/><rect x="1281.9" y="320.2" width="1.2" height="1.2"/><rect x="1297.3" y="310.9" width="1.2" height="1.2"/><rect x="1293.9" y="326.5" width="1.2" height="1.2"/><rect x="1304.8" y="308.1" width="1.2" height="1.2"/><rect x="1294.9" y="308.6" width="1.2" height="1.2"/><rect x="1283.3" y="315.2" width="1.2" height="1.2"/><rect x="1313.6" y="321.7" width="1.2" height="1.2"/><rect x="1296.2" y="312.6" width="1.2" height="1.2"/><rect x="1297.4" y="319.3" width="1.2" height="1.2"/><rect x="1285.2" y="305.6" width="1.2" height="1.2"/><rect x="1309.7" y="315.7" width="1.2" height="1.2"/><rect x="1307.7" y="315.5" width="1.2" height="1.2"/><rect x="1306.8" y="311.5" width="1.2" height="1.2"/><rect x="1299.6" y="321.7" width="1.2" height="1.2"/><rect x="1303.4" y="312.2" width="1.2" height="1.2"/><rect x="1302.5" y="311.3" width="1.2" height="1.2"/><rect x="1285.4" y="316.9" width="1.2" height="1.2"/><rect x="1306.3" y="318.4" width="1.2" height="1.2"/><rect x="1286.6" y="318.5" width="1.2" height="1.2"/><rect x="1300.9" y="312.2" width="1.2" height="1.2"/><rect x="1277.5" y="319.2" width="1.2" height="1.2"/><rect x="1302.5" y="316.8" width="1.2" height="1.2"/><rect x="1283.0" y="307.3" width="1.2" height="1.2"/><rect x="1303.4" y="318.2" width="1.2" height="1.2"/><rect x="1299.6" y="313.2" width="1.2" height="1.2"/><rect x="1298.8" y="311.8" width="1.2" height="1.2"/><rect x="1293.6" y="310.3" width="1.2" height="1.2"/><rect x="1297.8" y="312.4" width="1.2" height="1.2"/><rect x="1303.0" y="317.8" width="1.2" height="1.2"/><rect x="1289.8" y="323.2" width="1.2" height="1.2"/><rect x="1287.5" y="316.5" width="1.2" height="1.2"/><rect x="1304.0" y="320.5" width="1.2" height="1.2"/><rect x="1279.4" y="319.2" width="1.2" height="1.2"/><rect x="1305.0" y="321.3" width="1.2" height="1.2"/><rect x="1279.3" y="311.2" width="1.2" height="1.2"/><rect x="1295.2" y="312.3" width="1.2" height="1.2"/><rect x="1305.9" y="311.1" width="1.2" height="1.2"/><rect x="1305.1" y="317.1" width="1.2" height="1.2"/><rect x="1285.0" y="309.6" width="1.2" height="1.2"/><rect x="1292.4" y="314.9" width="1.2" height="1.2"/><rect x="1303.3" y="313.5" width="1.2" height="1.2"/><rect x="1302.7" y="306.8" width="1.2" height="1.2"/><rect x="1273.0" y="312.8" width="1.2" height="1.2"/><rect x="1299.3" y="312.7" width="1.2" height="1.2"/><rect x="1288.3" y="316.4" width="1.2" height="1.2"/><rect x="1310.4" y="313.9" width="1.2" height="1.2"/><rect x="1290.5" y="310.3" width="1.2" height="1.2"/><rect x="1310.6" y="314.2" width="1.2" height="1.2"/><rect x="1300.5" y="320.3" width="1.2" height="1.2"/><rect x="1304.0" y="310.0" width="1.2" height="1.2"/><rect x="1303.1" y="318.5" width="1.2" height="1.2"/><rect x="1299.6" y="319.2" width="1.2" height="1.2"/><rect x="1291.7" y="314.0" width="1.2" height="1.2"/><rect x="1292.0" y="318.0" width="1.2" height="1.2"/><rect x="1291.0" y="316.3" width="1.2" height="1.2"/><rect x="1287.7" y="313.8" width="1.2" height="1.2"/><rect x="1293.2" y="313.9" width="1.2" height="1.2"/><rect x="1296.9" y="313.5" width="1.2" height="1.2"/><rect x="1294.3" y="304.5" width="1.2" height="1.2"/><rect x="1304.2" y="311.4" width="1.2" height="1.2"/><rect x="1294.1" y="310.4" width="1.2" height="1.2"/><rect x="1303.4" y="310.1" width="1.2" height="1.2"/><rect x="1299.7" y="320.1" width="1.2" height="1.2"/><rect x="1308.2" y="320.1" width="1.2" height="1.2"/><rect x="1300.5" y="308.7" width="1.2" height="1.2"/><rect x="1305.6" y="320.1" width="1.2" height="1.2"/><rect x="1302.2" y="318.3" width="1.2" height="1.2"/><rect x="1296.5" y="311.9" width="1.2" height="1.2"/><rect x="1304.0" y="320.5" width="1.2" height="1.2"/><rect x="1288.2" y="318.8" width="1.2" height="1.2"/><rect x="1297.8" y="318.7" width="1.2" height="1.2"/><rect x="1298.0" y="319.8" width="1.2" height="1.2"/><rect x="1303.6" y="318.7" width="1.2" height="1.2"/><rect x="1285.7" y="318.4" width="1.2" height="1.2"/><rect x="1296.4" y="309.1" width="1.2" height="1.2"/><rect x="1301.3" y="307.9" width="1.2" height="1.2"/><rect x="1302.7" y="322.6" width="1.2" height="1.2"/><rect x="1292.3" y="318.9" width="1.2" height="1.2"/><rect x="1299.4" y="317.6" width="1.2" height="1.2"/><rect x="1286.0" y="317.4" width="1.2" height="1.2"/><rect x="1297.0" y="318.0" width="1.2" height="1.2"/><rect x="1296.1" y="319.7" width="1.2" height="1.2"/><rect x="1298.1" y="317.7" width="1.2" height="1.2"/><rect x="1306.3" y="315.4" width="1.2" height="1.2"/><rect x="1303.5" y="315.6" width="1.2" height="1.2"/><rect x="1300.0" y="312.0" width="1.2" height="1.2"/><rect x="1301.9" y="320.4" width="1.2" height="1.2"/><rect x="1295.5" y="318.3" width="1.2" height="1.2"/><rect x="1299.3" y="309.3" width="1.2" height="1.2"/><rect x="1298.7" y="320.8" width="1.2" height="1.2"/><rect x="1292.5" y="306.1" width="1.2" height="1.2"/><rect x="1297.6" y="311.5" width="1.2" height="1.2"/><rect x="1310.2" y="314.4" width="1.2" height="1.2"/><rect x="1296.1" y="311.6" width="1.2" height="1.2"/><rect x="1298.0" y="311.9" width="1.2" height="1.2"/><rect x="1289.5" y="314.3" width="1.2" height="1.2"/><rect x="1290.2" y="320.8" width="1.2" height="1.2"/><rect x="1287.6" y="314.2" width="1.2" height="1.2"/><rect x="1291.1" y="308.1" width="1.2" height="1.2"/><rect x="1308.4" y="304.7" width="1.2" height="1.2"/><rect x="1306.9" y="307.9" width="1.2" height="1.2"/><rect x="1296.8" y="325.2" width="1.2" height="1.2"/><rect x="1280.5" y="308.1" width="1.2" height="1.2"/><rect x="1305.8" y="315.4" width="1.2" height="1.2"/><rect x="1292.1" y="314.4" width="1.2" height="1.2"/><rect x="1289.1" y="315.1" width="1.2" height="1.2"/><rect x="1307.2" y="312.8" width="1.2" height="1.2"/><rect x="1297.2" y="320.2" width="1.2" height="1.2"/><rect x="1310.8" y="311.8" width="1.2" height="1.2"/><rect x="1298.4" y="311.9" width="1.2" height="1.2"/><rect x="1291.4" y="312.7" width="1.2" height="1.2"/><rect x="1291.5" y="306.4" width="1.2" height="1.2"/><rect x="1281.5" y="311.1" width="1.2" height="1.2"/><rect x="1297.1" y="320.3" width="1.2" height="1.2"/><rect x="1292.3" y="313.8" width="1.2" height="1.2"/><rect x="1301.0" y="318.1" width="1.2" height="1.2"/><rect x="1295.3" y="314.3" width="1.2" height="1.2"/><rect x="1309.9" y="313.0" width="1.2" height="1.2"/><rect x="1292.6" y="306.9" width="1.2" height="1.2"/><rect x="1299.3" y="313.3" width="1.2" height="1.2"/><rect x="1310.2" y="313.0" width="1.2" height="1.2"/><rect x="1302.1" y="319.0" width="1.2" height="1.2"/><rect x="1308.3" y="308.4" width="1.2" height="1.2"/><rect x="1307.7" y="314.6" width="1.2" height="1.2"/><rect x="1295.4" y="313.1" width="1.2" height="1.2"/><rect x="1293.3" y="313.0" width="1.2" height="1.2"/><rect x="1279.0" y="317.0" width="1.2" height="1.2"/><rect x="1296.6" y="310.1" width="1.2" height="1.2"/><rect x="1295.7" y="325.4" width="1.2" height="1.2"/><rect x="1299.0" y="312.7" width="1.2" height="1.2"/><rect x="1308.7" y="310.8" width="1.2" height="1.2"/><rect x="1295.0" y="312.0" width="1.2" height="1.2"/><rect x="1294.4" y="318.0" width="1.2" height="1.2"/><rect x="1300.4" y="311.1" width="1.2" height="1.2"/><rect x="1295.2" y="315.0" width="1.2" height="1.2"/><rect x="1293.2" y="314.4" width="1.2" height="1.2"/><rect x="1290.9" y="311.1" width="1.2" height="1.2"/><rect x="1296.5" y="309.7" width="1.2" height="1.2"/><rect x="1299.2" y="313.7" width="1.2" height="1.2"/><rect x="1289.4" y="311.7" width="1.2" height="1.2"/><rect x="1292.6" y="313.8" width="1.2" height="1.2"/><rect x="1297.0" y="313.6" width="1.2" height="1.2"/><rect x="1289.8" y="321.2" width="1.2" height="1.2"/><rect x="1302.7" y="315.1" width="1.2" height="1.2"/><rect x="1303.1" y="316.1" width="1.2" height="1.2"/><rect x="1294.2" y="314.9" width="1.2" height="1.2"/><rect x="1315.6" y="319.2" width="1.2" height="1.2"/><rect x="1303.7" y="312.7" width="1.2" height="1.2"/><rect x="1300.5" y="325.1" width="1.2" height="1.2"/><rect x="1299.2" y="319.5" width="1.2" height="1.2"/><rect x="1305.3" y="317.5" width="1.2" height="1.2"/><rect x="1307.6" y="315.6" width="1.2" height="1.2"/><rect x="1299.7" y="311.6" width="1.2" height="1.2"/><rect x="1315.3" y="316.0" width="1.2" height="1.2"/><rect x="1296.9" y="321.0" width="1.2" height="1.2"/><rect x="1292.6" y="314.5" width="1.2" height="1.2"/><rect x="1290.4" y="314.6" width="1.2" height="1.2"/><rect x="1293.3" y="317.1" width="1.2" height="1.2"/><rect x="1295.2" y="311.8" width="1.2" height="1.2"/><rect x="1294.0" y="314.0" width="1.2" height="1.2"/><rect x="1292.4" y="318.9" width="1.2" height="1.2"/><rect x="1301.0" y="315.2" width="1.2" height="1.2"/><rect x="1287.5" y="316.9" width="1.2" height="1.2"/><rect x="1286.8" y="315.4" width="1.2" height="1.2"/><rect x="1296.5" y="311.8" width="1.2" height="1.2"/><rect x="1290.1" y="311.3" width="1.2" height="1.2"/><rect x="1311.0" y="313.3" width="1.2" height="1.2"/><rect x="1294.6" y="319.0" width="1.2" height="1.2"/><rect x="1299.1" y="319.4" width="1.2" height="1.2"/><rect x="1287.2" y="309.5" width="1.2" height="1.2"/><rect x="1320.2" y="314.3" width="1.2" height="1.2"/><rect x="1294.0" y="315.3" width="1.2" height="1.2"/><rect x="1303.3" y="309.0" width="1.2" height="1.2"/><rect x="1298.2" y="314.4" width="1.2" height="1.2"/><rect x="1301.0" y="315.3" width="1.2" height="1.2"/><rect x="1292.3" y="310.5" width="1.2" height="1.2"/><rect x="1278.5" y="319.1" width="1.2" height="1.2"/><rect x="1285.5" y="312.7" width="1.2" height="1.2"/><rect x="1308.1" y="312.6" width="1.2" height="1.2"/><rect x="1300.5" y="313.6" width="1.2" height="1.2"/><rect x="1301.1" y="314.7" width="1.2" height="1.2"/><rect x="1292.4" y="320.8" width="1.2" height="1.2"/><rect x="1294.2" y="308.3" width="1.2" height="1.2"/><rect x="1293.7" y="317.0" width="1.2" height="1.2"/><rect x="1288.1" y="318.2" width="1.2" height="1.2"/><rect x="1301.6" y="324.3" width="1.2" height="1.2"/><rect x="1291.5" y="317.6" width="1.2" height="1.2"/><rect x="1284.1" y="312.6" width="1.2" height="1.2"/><rect x="1296.9" y="316.4" width="1.2" height="1.2"/><rect x="1295.7" y="314.1" width="1.2" height="1.2"/><rect x="1291.7" y="312.5" width="1.2" height="1.2"/><rect x="1298.3" y="317.1" width="1.2" height="1.2"/><rect x="1300.7" y="319.1" width="1.2" height="1.2"/><rect x="1304.7" y="306.2" width="1.2" height="1.2"/><rect x="1292.3" y="313.8" width="1.2" height="1.2"/><rect x="1291.5" y="319.3" width="1.2" height="1.2"/><rect x="1301.5" y="314.0" width="1.2" height="1.2"/><rect x="1297.0" y="320.3" width="1.2" height="1.2"/><rect x="1293.6" y="313.1" width="1.2" height="1.2"/><rect x="1302.6" y="316.7" width="1.2" height="1.2"/><rect x="1306.3" y="316.2" width="1.2" height="1.2"/><rect x="1301.5" y="312.0" width="1.2" height="1.2"/><rect x="1289.3" y="314.5" width="1.2" height="1.2"/><rect x="1277.0" y="316.4" width="1.2" height="1.2"/><rect x="1303.1" y="314.9" width="1.2" height="1.2"/><rect x="1294.5" y="319.5" width="1.2" height="1.2"/><rect x="1295.8" y="319.0" width="1.2" height="1.2"/><rect x="1311.8" y="317.9" width="1.2" height="1.2"/><rect x="1302.8" y="316.8" width="1.2" height="1.2"/><rect x="1297.9" y="315.8" width="1.2" height="1.2"/><rect x="1296.6" y="319.5" width="1.2" height="1.2"/><rect x="1284.5" y="313.3" width="1.2" height="1.2"/><rect x="1300.8" y="310.7" width="1.2" height="1.2"/><rect x="1295.3" y="311.3" width="1.2" height="1.2"/><rect x="1299.3" y="318.5" width="1.2" height="1.2"/><rect x="1306.5" y="316.8" width="1.2" height="1.2"/><rect x="1290.9" y="315.7" width="1.2" height="1.2"/><rect x="1300.2" y="321.0" width="1.2" height="1.2"/><rect x="1280.7" y="316.2" width="1.2" height="1.2"/><rect x="1283.0" y="317.8" width="1.2" height="1.2"/></g><g fill="#707060"><rect x="1303.1" y="319.9" width="1" height="1"/><rect x="1309.9" y="318.7" width="1" height="1"/><rect x="1286.4" y="318.4" width="1" height="1"/><rect x="1314.7" y="313.5" width="1" height="1"/><rect x="1296.8" y="301.9" width="1" height="1"/><rect x="1314.1" y="309.4" width="1" height="1"/><rect x="1285.0" y="310.0" width="1" height="1"/><rect x="1283.2" y="312.1" width="1" height="1"/><rect x="1315.8" y="323.0" width="1" height="1"/><rect x="1318.1" y="330.3" width="1" height="1"/><rect x="1282.6" y="319.7" width="1" height="1"/><rect x="1319.2" y="338.8" width="1" height="1"/><rect x="1274.7" y="299.7" width="1" height="1"/><rect x="1303.5" y="311.2" width="1" height="1"/><rect x="1281.1" y="318.7" width="1" height="1"/><rect x="1284.3" y="290.9" width="1" height="1"/><rect x="1295.9" y="316.0" width="1" height="1"/><rect x="1306.0" y="324.5" width="1" height="1"/><rect x="1299.1" y="312.2" width="1" height="1"/><rect x="1286.1" y="297.4" width="1" height="1"/><rect x="1289.6" y="325.1" width="1" height="1"/><rect x="1306.2" y="336.2" width="1" height="1"/><rect x="1293.9" y="295.9" width="1" height="1"/><rect x="1308.9" y="325.5" width="1" height="1"/><rect x="1278.4" y="297.7" width="1" height="1"/></g>
<ellipse cx="1295.9" cy="314.4" rx="10.5" ry="7.5" fill="#f8f800"/>
<ellipse cx="1295.9" cy="314.4" rx="9.5" ry="8.5" fill="none" stroke="#9050a0" stroke-width="0.9" opacity="0.5"/>
<rect x="1357.8" y="384.5" width="8.9" height="201" fill="#3a393b"/>
</svg>
<div class="btn" style="left:1375.6px;top:378.9px;width:20px;height:16.5px;line-height:15px;font-family:'Liberation Serif',serif;font-size:8.5px">+</div>
<div class="btn" style="left:1375.6px;top:404.7px;width:20px;height:16.5px;line-height:15px;font-family:'Liberation Serif',serif;font-size:8.5px">-</div>
<div class="btn" style="left:1375.6px;top:430.5px;width:20px;height:16.5px;line-height:15px;font-family:'Liberation Serif',serif;font-size:8.5px">R</div>
<div class="btn" style="left:1375.6px;top:455.4px;width:20px;height:16.5px;line-height:15px;font-family:'Liberation Serif',serif;font-size:8.5px">P/Z</div>
<div class="btn" style="left:1375.6px;top:481.2px;width:20px;height:16.5px;line-height:15px;font-family:'Liberation Serif',serif;font-size:8.5px">L</div>
<div class="a" style="left:15.8px;top:594.3px;width:1337.8px;height:10.2px;background:#c9c8cb"></div>
<svg class="a" style="left:0;top:590px" width="1400" height="18"><path d="M11.5 6 L8.5 9 L11.5 12" fill="none" stroke="#444" stroke-width="1.1"/><path d="M1359 6 L1362 9 L1359 12" fill="none" stroke="#444" stroke-width="1.1"/></svg>
<div class="a" style="left:3.9px;top:613.0px;width:67.8px;height:12.0px;background:#030203"></div>
<svg class="a" style="left:0;top:610px" width="80" height="18"><line x1="11.4" y1="8.7" x2="16.5" y2="8.7" stroke="#6a60e0" stroke-width="0.8"/><text x="0" y="0" transform="translate(16 12.6) scale(0.88 1.08)" fill="#6258dc" font-size="9" font-family="Liberation Sans">RA</text><line x1="42.7" y1="8.7" x2="48" y2="8.7" stroke="#d8142a" stroke-width="0.8"/><text x="0" y="0" transform="translate(48 12.6) scale(0.95 1.08)" fill="#dc1428" font-size="9" font-family="Liberation Sans">Dec</text></svg>
<div class="btn" style="left:657.5px;top:613.3px;width:20.4px;height:20.3px;line-height:21px;font-size:9.3px">-</div>
<div class="btn" style="left:686.8px;top:613.3px;width:20.2px;height:20.3px;line-height:21px;font-size:9.3px">+</div>
<div class="btn" style="left:716.0px;top:613.3px;width:20.0px;height:20.3px;line-height:21px;font-size:9.3px">R</div>
<div class="btn" style="left:1324.3px;top:613.3px;width:42.1px;height:20.3px;line-height:21px;font-size:9.3px">Text</div>
<div class="a" style="left:3.5px;top:648.2px;width:467.7px;height:85.8px;border:1px solid #dddce0;border-radius:2px"></div>
<div class="a" style="left:8.0px;top:642.0px;width:56.0px;height:10.0px;background:#f0eff2"></div>
<div class="t" style="left:10.9px;top:644.58px;font-size:9.30px;">Plot options</div>
<div class="a" style="left:11.9px;top:669.0px;width:48.9px;height:52.5px;border:1px solid #dddce0;border-radius:2px"></div>
<div class="a" style="left:15.9px;top:664.0px;width:32.0px;height:10.0px;background:#f0eff2"></div>
<div class="t" style="left:17.9px;top:665.58px;font-size:9.30px;">Device</div>
<div class="a" style="left:69.8px;top:669.0px;width:52.4px;height:52.5px;border:1px solid #dddce0;border-radius:2px"></div>
<div class="a" style="left:74.1px;top:664.0px;width:26.0px;height:10.0px;background:#f0eff2"></div>
<div class="t" style="left:76.1px;top:665.58px;font-size:9.30px;">Units</div>
<div class="a" style="left:127.4px;top:669.0px;width:53.6px;height:52.5px;border:1px solid #dddce0;border-radius:2px"></div>
<div class="a" style="left:131.8px;top:664.0px;width:26.0px;height:10.0px;background:#f0eff2"></div>
<div class="t" style="left:133.8px;top:665.58px;font-size:9.30px;">Axes</div>
<svg class="a" style="left:14.0px;top:684.8px" width="12" height="12"><circle cx="6" cy="6" r="4.6" fill="#f8f8f8" stroke="#5a5a5a" stroke-width="1"/><circle cx="6" cy="6" r="2.4" fill="#222"/></svg>
<div class="t" style="left:27.2px;top:687.18px;font-size:9.30px;">Mount</div>
<svg class="a" style="left:14.0px;top:702.9px" width="12" height="12"><circle cx="6" cy="6" r="4.6" fill="#f8f8f8" stroke="#c4c4c4" stroke-width="1"/></svg>
<div class="t" style="left:27.2px;top:705.28px;font-size:9.30px;color:#b0b0b0">AO</div>
<svg class="a" style="left:72.2px;top:684.8px" width="12" height="12"><circle cx="6" cy="6" r="4.6" fill="#f8f8f8" stroke="#5a5a5a" stroke-width="1"/><circle cx="6" cy="6" r="2.4" fill="#222"/></svg>
<div class="t" style="left:85.5px;top:687.18px;font-size:9.30px;">arc-sec</div>
<svg class="a" style="left:72.2px;top:702.9px" width="12" height="12"><circle cx="6" cy="6" r="4.6" fill="#f8f8f8" stroke="#5a5a5a" stroke-width="1"/></svg>
<div class="t" style="left:85.5px;top:705.28px;font-size:9.30px;">pixels</div>
<svg class="a" style="left:129.8px;top:684.8px" width="12" height="12"><circle cx="6" cy="6" r="4.6" fill="#f8f8f8" stroke="#5a5a5a" stroke-width="1"/><circle cx="6" cy="6" r="2.4" fill="#222"/></svg>
<div class="t" style="left:142.7px;top:687.18px;font-size:9.30px;">RA/Dec</div>
<svg class="a" style="left:129.8px;top:702.9px" width="12" height="12"><circle cx="6" cy="6" r="4.6" fill="#f8f8f8" stroke="#5a5a5a" stroke-width="1"/></svg>
<div class="t" style="left:142.7px;top:705.28px;font-size:9.30px;">dx/dy</div>
<svg class="a" style="left:185.0px;top:679.6px" width="12" height="12"><rect x="0.5" y="1" width="9.3" height="9.3" fill="#f8f8f8" stroke="#555" stroke-width="1"/><path d="M2 5.5 L4.3 8 L8.4 2.8" fill="none" stroke="#333" stroke-width="1"/></svg>
<div class="t" style="left:197.0px;top:681.58px;font-size:9.30px;">Corrections</div>
<svg class="a" style="left:185.0px;top:699.6px" width="12" height="12"><rect x="0.5" y="1" width="9.3" height="9.3" fill="#f8f8f8" stroke="#555" stroke-width="1"/><path d="M2 5.5 L4.3 8 L8.4 2.8" fill="none" stroke="#333" stroke-width="1"/></svg>
<div class="t" style="left:197.0px;top:701.58px;font-size:9.30px;">Grid</div>
<svg class="a" style="left:258.6px;top:679.6px" width="12" height="12"><rect x="0.5" y="1" width="9.3" height="9.3" fill="#f8f8f8" stroke="#555" stroke-width="1"/><path d="M2 5.5 L4.3 8 L8.4 2.8" fill="none" stroke="#333" stroke-width="1"/></svg>
<div class="t" style="left:270.7px;top:681.58px;font-size:9.30px;">RA</div>
<svg class="a" style="left:258.6px;top:699.6px" width="12" height="12"><rect x="0.5" y="1" width="9.3" height="9.3" fill="#f8f8f8" stroke="#555" stroke-width="1"/><path d="M2 5.5 L4.3 8 L8.4 2.8" fill="none" stroke="#333" stroke-width="1"/></svg>
<div class="t" style="left:270.7px;top:701.58px;font-size:9.30px;">Dec</div>
<svg class="a" style="left:299.5px;top:679.6px" width="12" height="12"><rect x="0.5" y="1" width="9.3" height="9.3" fill="#f8f8f8" stroke="#555" stroke-width="1"/></svg>
<div class="t" style="left:311.7px;top:681.58px;font-size:9.30px;">Star mass</div>
<svg class="a" style="left:299.5px;top:699.6px" width="12" height="12"><rect x="0.5" y="1" width="9.3" height="9.3" fill="#f8f8f8" stroke="#555" stroke-width="1"/></svg>
<div class="t" style="left:311.7px;top:701.58px;font-size:9.30px;">SNR</div>
<svg class="a" style="left:366.4px;top:679.6px" width="12" height="12"><rect x="0.5" y="1" width="9.3" height="9.3" fill="#f8f8f8" stroke="#555" stroke-width="1"/><path d="M2 5.5 L4.3 8 L8.4 2.8" fill="none" stroke="#333" stroke-width="1"/></svg>
<div class="t" style="left:378.2px;top:681.58px;font-size:9.30px;">Events</div>
<svg class="a" style="left:366.4px;top:699.6px" width="12" height="12"><rect x="0.5" y="1" width="9.3" height="9.3" fill="#f8f8f8" stroke="#555" stroke-width="1"/></svg>
<div class="t" style="left:378.2px;top:701.58px;font-size:9.30px;">Limits</div>
<svg class="a" style="left:417.6px;top:689.4px" width="12" height="12"><rect x="0.5" y="1" width="9.3" height="9.3" fill="#f8f8f8" stroke="#555" stroke-width="1"/><path d="M2 5.5 L4.3 8 L8.4 2.8" fill="none" stroke="#333" stroke-width="1"/></svg>
<div class="t" style="left:429.5px;top:691.38px;font-size:9.30px;">Scatter</div>
<div class="a" style="left:480.0px;top:659.3px;width:465.3px;height:75.1px;background:#fff;border:1px solid #e4e3e6"></div>
<div class="a" style="left:480.2px;top:642.4px;width:46.5px;height:17.6px;background:#fff;border:1px solid #e4e3e6;border-bottom:none"></div>
<div class="a" style="left:526.7px;top:643.2px;width:32.8px;height:16.1px;background:#f0eff2;border:1px solid #e4e3e6;border-bottom:none;border-left:none"></div>
<div class="t" style="left:485.1px;top:647.05px;font-size:9.10px;">Statistics</div>
<div class="t" style="left:530.5px;top:648.15px;font-size:9.10px;">Drift</div>
<div class="a" style="left:485.6px;top:664.2px;width:204.2px;height:64.8px;background:#f1f0f3;border:1px solid #b5b4b8"></div>
<div class="a" style="left:543.4px;top:678.5px;width:146.4px;height:50.5px;background:#c8c7ca"></div>
<div class="a" style="left:486.0px;top:678.0px;width:57.4px;height:1.0px;background:#b5b4b8"></div>
<div class="a" style="left:486.0px;top:695.0px;width:57.4px;height:1.0px;background:#b5b4b8"></div>
<div class="a" style="left:486.0px;top:711.7px;width:57.4px;height:1.0px;background:#b5b4b8"></div>
<div class="a" style="left:543.4px;top:678.0px;width:145.9px;height:1.0px;background:#b5b4b8"></div>
<div class="a" style="left:543.0px;top:664.5px;width:1.0px;height:64.5px;background:#b5b4b8"></div>
<div class="a" style="left:614.0px;top:664.5px;width:1.0px;height:14.5px;background:#b5b4b8"></div>
<div class="t" style="left:543.4px;top:668.53px;width:70.8px;text-align:center;font-weight:bold;font-size:9.3px">RMS</div>
<div class="t" style="left:614.2px;top:668.53px;width:75.6px;text-align:center;font-weight:bold;font-size:9.3px">Peak</div>
<div class="t" style="left:485.6px;top:683.48px;width:57.8px;text-align:center;font-weight:bold;font-size:9.3px">RA</div>
<div class="t" style="left:485.6px;top:700.28px;width:57.8px;text-align:center;font-weight:bold;font-size:9.3px">Dec</div>
<div class="t" style="left:485.6px;top:717.28px;width:57.8px;text-align:center;font-weight:bold;font-size:9.3px">Total</div>
<div class="t" style="left:548.5px;top:683.48px;font-size:9.30px;color:#333">0.87&quot; (0.31 px)</div>
<div class="t" style="left:617.0px;top:683.48px;font-size:9.30px;color:#333">-5.51&quot; (-1.98 px)</div>
<div class="t" style="left:548.5px;top:700.28px;font-size:9.30px;color:#333">0.50&quot; (0.18 px)</div>
<div class="t" style="left:619.3px;top:700.28px;font-size:9.30px;color:#333">2.44&quot; ( 0.88 px)</div>
<div class="t" style="left:548.5px;top:717.28px;font-size:9.30px;color:#333">1.00&quot; (0.36 px)</div>
<div class="a" style="left:0.0px;top:739.2px;width:1400.0px;height:1.0px;background:#e0dfe2"></div>
<div class="a" style="left:0.0px;top:757.5px;width:1400.0px;height:29.5px;background:#d9d7db"></div>
<svg class="a" style="left:0;top:757px" width="1400" height="30">
<!-- windows logo -->
<g fill="#111">
<rect x="11.3" y="9" width="5.6" height="5.7"/><rect x="17.8" y="8.5" width="5.8" height="6.2"/>
<rect x="11.3" y="15.5" width="5.6" height="5.7"/><rect x="17.8" y="15.5" width="5.8" height="6.3"/>
</g>
<!-- search -->
<circle cx="54.5" cy="12.5" r="4.3" fill="none" stroke="#222" stroke-width="1.3"/>
<line x1="51.4" y1="15.7" x2="47" y2="20.8" stroke="#222" stroke-width="1.4"/>
<!-- task view -->
<g fill="none" stroke="#222" stroke-width="1.2">
<rect x="83.5" y="10.5" width="5.5" height="8"/>
<line x1="81.5" y1="9.5" x2="81.5" y2="19.5"/><line x1="91" y1="9.5" x2="91" y2="19.5"/>
<line x1="93.3" y1="13" x2="93.3" y2="20"/>
</g>
<circle cx="93.3" cy="10" r="0.9" fill="#222"/>
<!-- file explorer -->
<path d="M116 10 h5 l1.5 1.5 h10.2 v10.6 h-16.7z" fill="#f6cf63"/>
<rect x="116" y="8.2" width="5.5" height="2.5" rx="0.8" fill="#e4a62e"/>
<rect x="120.5" y="14.6" width="8" height="7.5" fill="#2b78d6"/>
<rect x="122.8" y="17.3" width="3.4" height="4.8" fill="#f3c95a"/>
<rect x="110" y="28.3" width="29" height="1.7" fill="#1f6fc9"/>
<!-- edge -->
<circle cx="160.6" cy="15.2" r="9.1" fill="#1b64c8"/>
<path d="M151.8 13 C153 7.5 157 6 160.6 6.1 C166 6.2 169.8 10.5 169.7 15.5 C169.6 18 168 19.5 165.5 19.5 C163 19.5 162 18 161.5 16.5 C160.5 13 156 11 151.8 13z" fill="#45bd7e"/>
<path d="M164 8.5 C167.5 10 169.5 13 169.7 15.5 C169.5 18 167.5 19.5 165.5 19.5 C166.5 16 166 11.5 164 8.5z" fill="#39a9d8"/>
<path d="M157.5 19.8 C155.5 18.5 155.8 15.2 158.5 14.8 C160.5 14.5 161.3 16 161.8 17 C162.5 18.6 164 19.5 166 19.4 C164 20.8 160 21.2 157.5 19.8z" fill="#dfeef6"/>
<rect x="145" y="28.3" width="30" height="1.7" fill="#1f6fc9"/>
<!-- calculator -->
<rect x="189.5" y="6.6" width="13.4" height="17" rx="1" fill="#5b6673"/>
<rect x="190.8" y="7.8" width="10.8" height="3" fill="#42c6e6"/>
<g fill="#e6e8ec">
<rect x="190.8" y="12.2" width="2.8" height="2.5"/><rect x="194.7" y="12.2" width="2.8" height="2.5"/><rect x="198.6" y="12.2" width="3" height="2.5"/>
<rect x="190.8" y="15.8" width="2.8" height="2.5"/><rect x="194.7" y="15.8" width="2.8" height="2.5"/>
<rect x="190.8" y="19.4" width="2.8" height="2.8"/><rect x="194.7" y="19.4" width="2.8" height="2.8"/>
</g>
<rect x="198.6" y="15.8" width="3" height="6.4" fill="#1c3f7a"/>
<!-- bird app -->
<rect x="223" y="6.6" width="17.6" height="17.2" rx="3" fill="#2f7fe9"/>
<path d="M226.3 10.8 C228.8 11.6 230.6 13 231.8 14.8 C233.5 12 235.8 9.6 238.6 8.2 C237.8 11.5 236.5 14.8 234.6 17.2 C233.6 18.4 233 19.6 232.8 21.8 C231.5 20.4 230.6 19.2 229.6 18.4 C227.6 16.8 226.5 14 226.3 10.8z" fill="#f4f8ff"/>
<!-- S app -->
<circle cx="268" cy="14.7" r="9" fill="#f4f4f6"/>
<path d="M271.8 9.6 C269.8 7.6 265.2 8 263.8 11.2 C262.6 14 264.8 16 267.5 16.6" fill="none" stroke="#3b7de6" stroke-width="2.8" stroke-linecap="round"/>
<path d="M265.5 14.2 L272.5 15.8 L267.2 21 z" fill="#3b7de6"/>
<!-- powerpoint -->
<circle cx="304.5" cy="15" r="7.5" fill="#e9613d"/>
<path d="M304.5 7.5 A7.5 7.5 0 0 1 312 15 L304.5 15z" fill="#f08a5c"/>
<rect x="294.3" y="9.5" width="9.5" height="10" rx="0.8" fill="#c43b1f"/>
<text x="296.2" y="18" font-family="Liberation Sans" font-weight="bold" font-size="8" fill="#fff">P</text>
<rect x="288.6" y="28.3" width="29.4" height="1.7" fill="#1f6fc9"/>
<!-- wechat -->
<ellipse cx="335.8" cy="13.4" rx="6.5" ry="5.6" fill="#3fc364"/>
<path d="M331.5 17.5 L331 20 L334 18.2z" fill="#3fc364"/>
<ellipse cx="341.8" cy="17.6" rx="5.5" ry="4.4" fill="#eceaed"/>
<circle cx="340" cy="17.4" r="0.8" fill="#888"/><circle cx="343.5" cy="17.4" r="0.8" fill="#888"/>
<rect x="324.3" y="28.3" width="28.5" height="1.7" fill="#1f6fc9"/>
<!-- active app -->
<rect x="356.7" y="1" width="32.8" height="29" fill="#eeecf0"/>
<rect x="390.3" y="1" width="1.2" height="29" fill="#e8e6ea"/>
<path d="M372 8 h6.5 l3.5 3.5 v11.5 h-10z" fill="#f6f6f8" stroke="#9aa0b0" stroke-width="0.7"/>
<circle cx="371.8" cy="13.2" r="5.3" fill="#e8eaf2" stroke="#1c2f6e" stroke-width="1.5"/>
<circle cx="371.6" cy="13" r="2.6" fill="#c8625e"/>
<line x1="375.5" y1="17" x2="382" y2="22.8" stroke="#1c2f6e" stroke-width="2"/>
<rect x="357.3" y="28.3" width="32.7" height="1.7" fill="#1f6fc9"/>
<!-- paint -->
<ellipse cx="409" cy="16" rx="8.5" ry="6.5" fill="#c9dde6" transform="rotate(-20 409 16)"/>
<circle cx="405" cy="16" r="1.1" fill="#d2685a"/><circle cx="407" cy="12.5" r="1.1" fill="#6aa2d8"/><circle cx="410" cy="19.5" r="1.1" fill="#8ac86a"/>
<line x1="411" y1="22" x2="418.5" y2="8" stroke="#e89a3a" stroke-width="1.6"/>
<rect x="395.9" y="28.3" width="28.9" height="1.7" fill="#1f6fc9"/>
<!-- tray: weather -->
<circle cx="1154.5" cy="12.5" r="3.6" fill="#f4b73a"/>
<path d="M1145 17.5 C1145 14.5 1148 13.5 1150 14 C1151 11.5 1155.5 11.5 1157 14.5 C1159.5 14.5 1160.5 17 1159.5 19 L1146 19 C1145.3 18.8 1145 18.2 1145 17.5z" fill="#dfe6ee"/>
<circle cx="1158" cy="22.5" r="1.8" fill="#e0202c"/>
<text x="1165.7" y="20.3" font-family="Liberation Sans" font-size="10.3" fill="#222">73°F</text>
<text x="1193.6" y="20.3" font-size="10" fill="#222">多云</text>
<path d="M1227 18 L1230.5 14.5 L1234 18" fill="none" stroke="#222" stroke-width="1.1"/>
<!-- battery -->
<rect x="1244.5" y="12.8" width="9.5" height="6" fill="none" stroke="#222" stroke-width="1.1"/>
<rect x="1246" y="14.3" width="6.5" height="3" fill="#222"/>
<rect x="1242.8" y="11.3" width="2.5" height="2" fill="#222"/>
<!-- wifi -->
<g fill="none" stroke="#555" stroke-width="0.9">
<path d="M1262.5 16.5 A7 7 0 0 1 1269.5 11.5"/><path d="M1264.5 18 A4.5 4.5 0 0 1 1269.5 14.2"/><path d="M1266.5 19.5 A2.3 2.3 0 0 1 1269.5 17"/>
</g>
<circle cx="1269.7" cy="20" r="1.1" fill="#222"/>
<!-- volume -->
<path d="M1276.8 13.5 h2.5 l3.5 -3 v11.5 l-3.5 -3 h-2.5z" fill="none" stroke="#222" stroke-width="1"/>
<path d="M1284.5 13.3 C1285.5 14.5 1285.5 17 1284.5 18.3 M1286.8 11.5 C1288.8 13.5 1288.8 18 1286.8 20" fill="none" stroke="#222" stroke-width="0.9"/>
<text x="1294" y="20.5" font-size="10.5" fill="#111">中</text>
<text x="1320" y="12.3" font-family="Liberation Sans" font-size="9.4" fill="#222">9:51:06</text>
<text x="1313.2" y="25.8" font-family="Liberation Sans" font-size="9.4" fill="#222">2022/9/25</text>
<!-- notification -->
<path d="M1370 9.4 h11.7 v8.6 h-4 l-1.8 2.5 l-1.8 -2.5 h-4.1z" fill="#111"/>
<g stroke="#ddd" stroke-width="0.8"><line x1="1372.5" y1="12" x2="1379" y2="12"/><line x1="1372.5" y1="14" x2="1379" y2="14"/><line x1="1372.5" y1="16" x2="1377" y2="16"/></g>
<rect x="1397" y="0" width="1" height="30" fill="#bcbabe"/>
</svg>

</body></html>
